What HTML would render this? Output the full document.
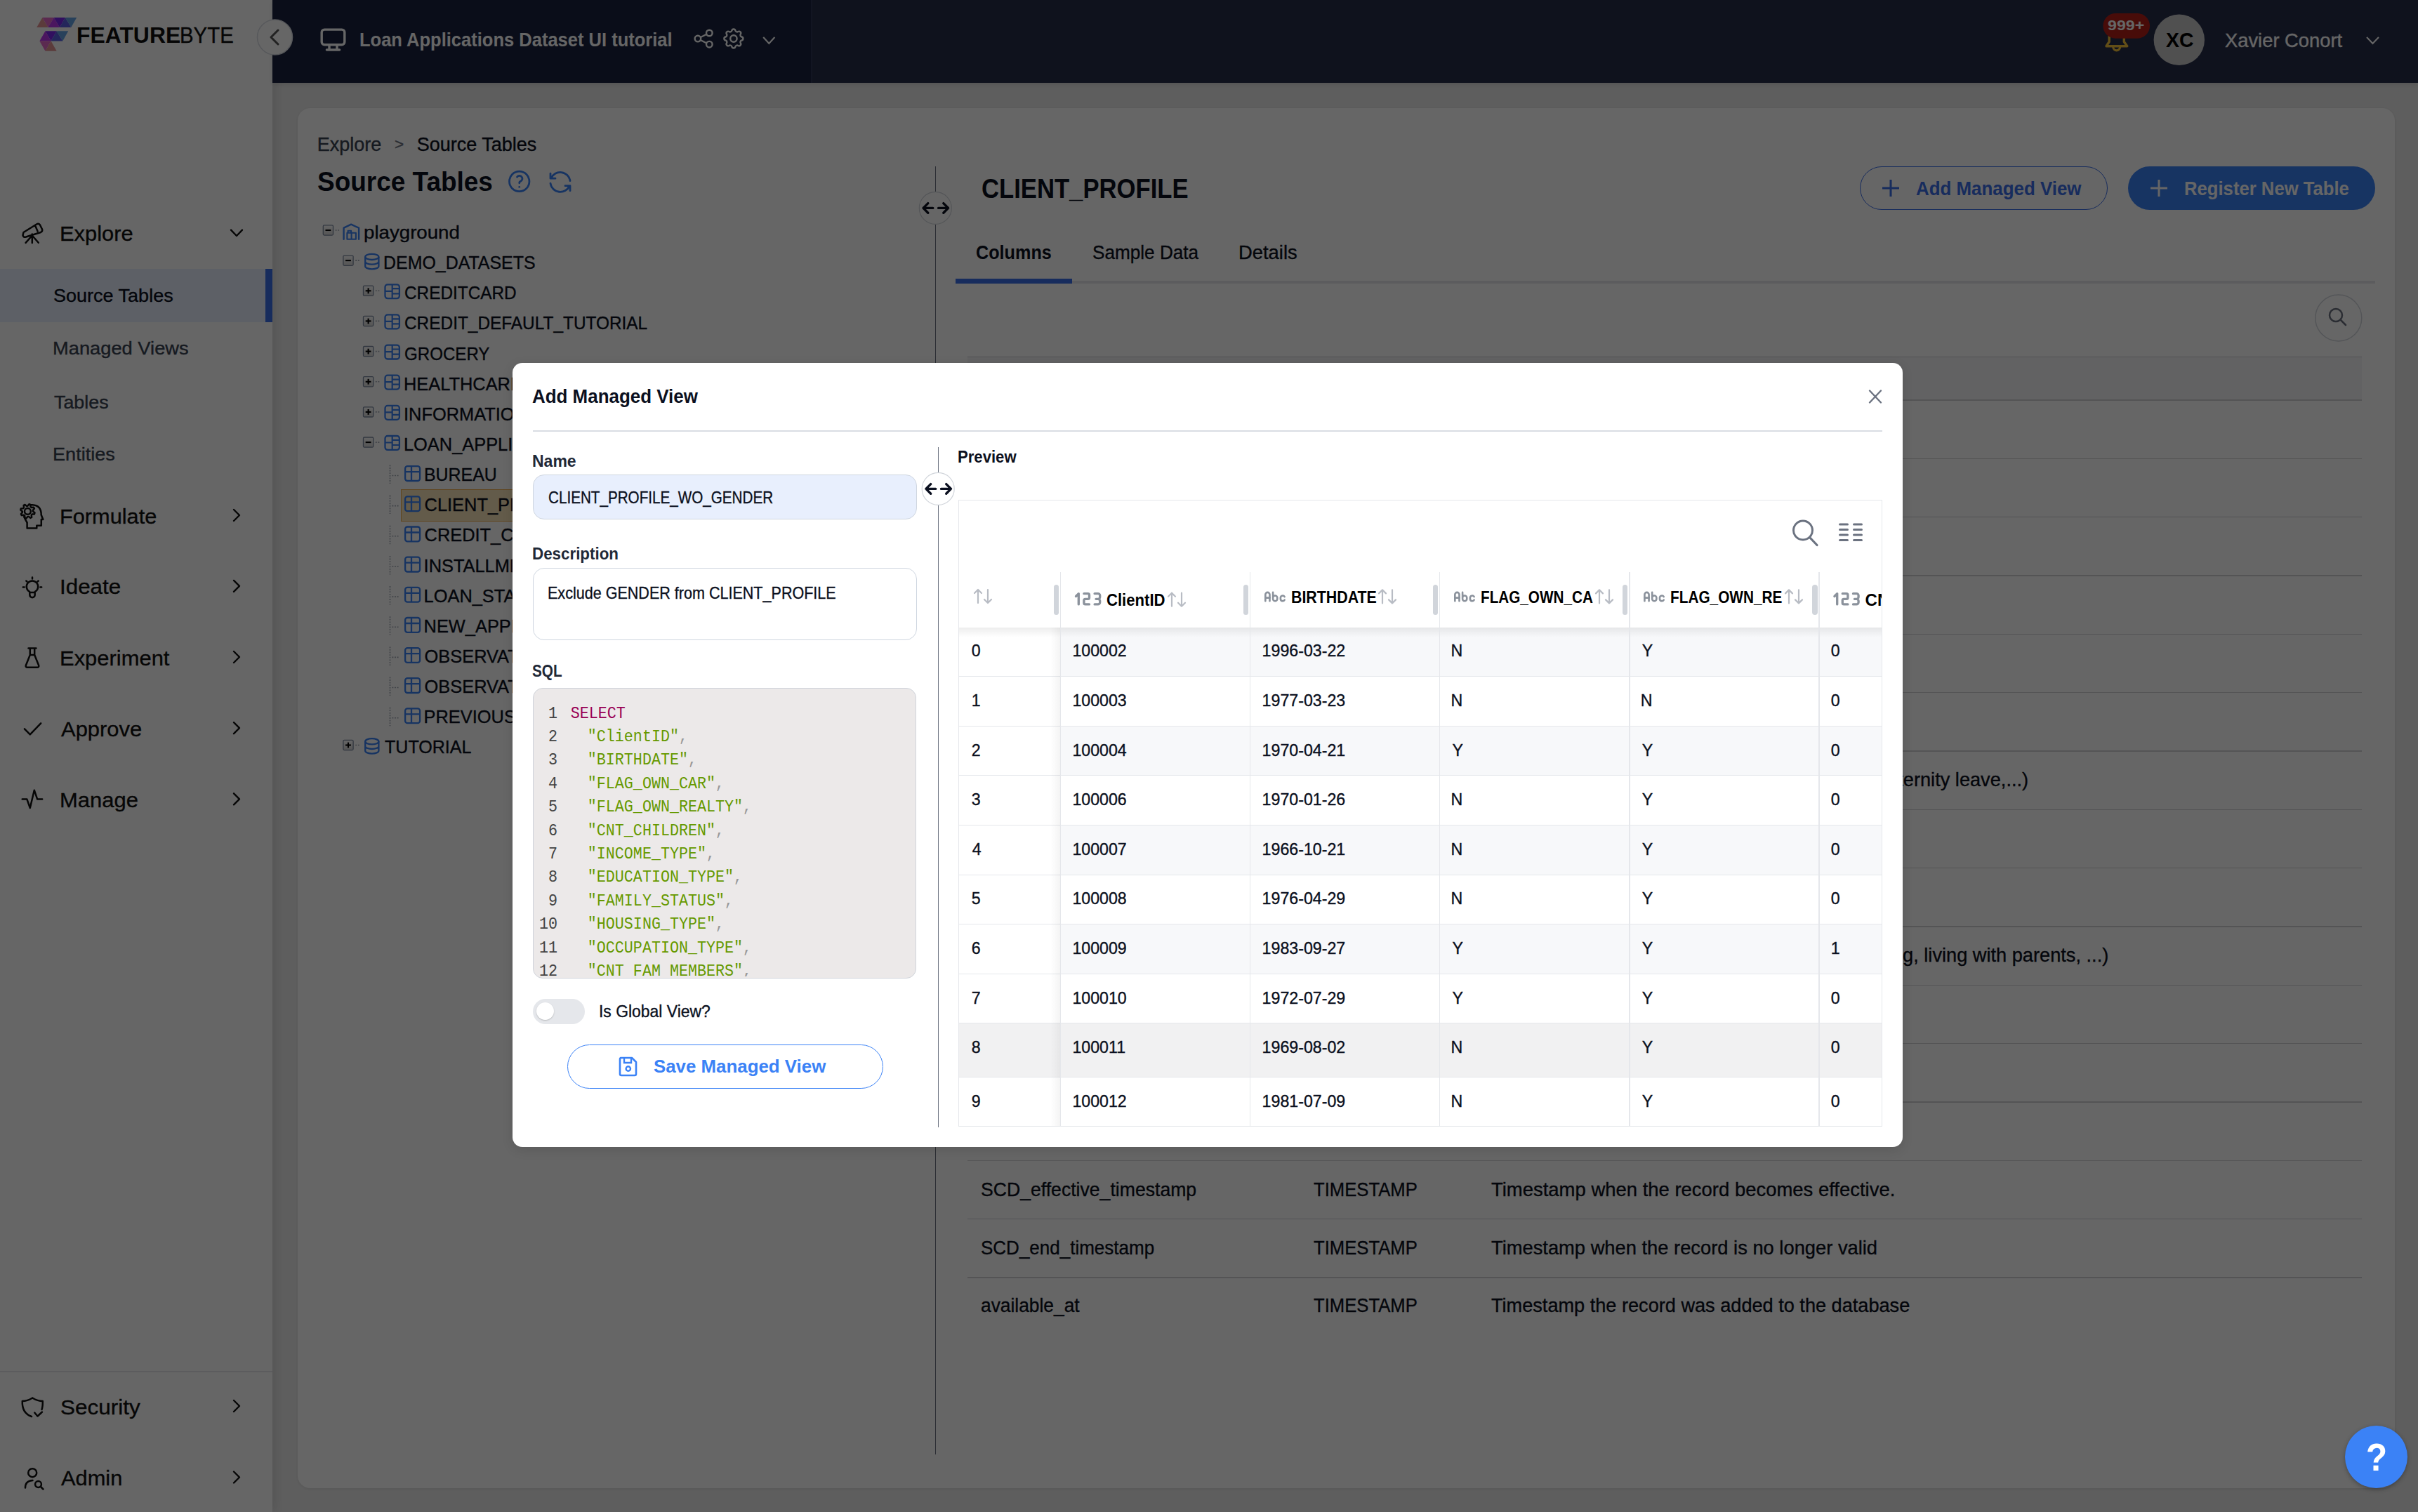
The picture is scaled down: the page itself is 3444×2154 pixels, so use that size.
<!DOCTYPE html>
<html><head><meta charset="utf-8"><title>FeatureByte - Add Managed View</title>
<style>html,body{margin:0;padding:0;width:3444px;height:2154px;overflow:hidden;font-family:'Liberation Sans', sans-serif;}</style></head>
<body><div style="position:relative;width:3444px;height:2154px;overflow:hidden;">
<div style="position:absolute;left:0;top:0;width:3444px;height:2154px;z-index:0"><div style="position:absolute;left:0px;top:0px;width:3444px;height:2154px;background:#ebebeb;"></div><div style="position:absolute;left:0px;top:0px;width:388px;height:2154px;background:#ffffff;box-shadow:4px 0 14px rgba(0,0,0,0.10);"></div><div style="position:absolute;left:388px;top:0px;width:3056px;height:118px;background:#262d4a;box-shadow:0 2px 6px rgba(0,0,0,0.12);"></div><div style="position:absolute;left:388px;top:0px;width:767px;height:118px;background:#1b2240;border-right:2px solid #2f3656;"></div><div style="position:absolute;left:424px;top:154px;width:2987px;height:1966px;background:#ffffff;border-radius:18px;box-shadow:0 1px 4px rgba(0,0,0,0.08);"></div><div style="position:absolute;left:108.9px;top:34.5px;font-family:'Liberation Sans', sans-serif;font-size:31px;line-height:31px;font-weight:700;color:#111111;white-space:pre;z-index:2;transform:scale(1.0284,1.0000);transform-origin:0 25.5px;">FEATURE</div><div style="position:absolute;left:256.1px;top:34.5px;font-family:'Liberation Sans', sans-serif;font-size:31px;line-height:31px;font-weight:400;color:#111111;white-space:pre;z-index:2;-webkit-text-stroke:0.35px #111111;transform:scale(0.9487,1.0000);transform-origin:0 25.5px;">BYTE</div><div style="position:absolute;left:512.2px;top:43.0px;font-family:'Liberation Sans', sans-serif;font-size:28px;line-height:28px;font-weight:700;color:#ffffff;white-space:pre;z-index:2;transform:scale(0.9113,1.0000);transform-origin:0 23.0px;">Loan Applications Dataset UI tutorial</div><div style="position:absolute;left:3002.0px;top:26.1px;font-family:'Liberation Sans', sans-serif;font-size:20.5px;line-height:20.5px;font-weight:700;color:#ffffff;white-space:pre;z-index:2;transform:scale(1.1304,1.0000);transform-origin:0 16.9px;">999+</div><div style="position:absolute;left:3084.8px;top:42.1px;font-family:'Liberation Sans', sans-serif;font-size:30px;line-height:30px;font-weight:700;color:#000000;white-space:pre;z-index:2;transform:scale(0.9463,1.0000);transform-origin:0 24.7px;">XC</div><div style="position:absolute;left:3169.2px;top:43.8px;font-family:'Liberation Sans', sans-serif;font-size:27.5px;line-height:27.5px;font-weight:400;color:#ffffff;white-space:pre;z-index:2;-webkit-text-stroke:0.35px #ffffff;transform:scale(0.9940,1.0000);transform-origin:0 22.6px;">Xavier Conort</div><div style="position:absolute;left:0px;top:383px;width:378px;height:76px;background:#e8efff;"></div><div style="position:absolute;left:378px;top:383px;width:10px;height:76px;background:#3b6ee8;"></div><div style="position:absolute;left:84.8px;top:317.0px;font-family:'Liberation Sans', sans-serif;font-size:30.4px;line-height:30.4px;font-weight:400;color:#111111;white-space:pre;z-index:2;-webkit-text-stroke:0.35px #111111;transform:scale(1.0160,1.0000);transform-origin:0 25.0px;">Explore</div><div style="position:absolute;left:75.7px;top:408.3px;font-family:'Liberation Sans', sans-serif;font-size:26px;line-height:26px;font-weight:400;color:#0b1020;white-space:pre;z-index:2;-webkit-text-stroke:0.35px #0b1020;transform:scale(1.0387,1.0000);transform-origin:0 21.4px;">Source Tables</div><div style="position:absolute;left:74.6px;top:483.4px;font-family:'Liberation Sans', sans-serif;font-size:26px;line-height:26px;font-weight:400;color:#374151;white-space:pre;z-index:2;-webkit-text-stroke:0.35px #374151;transform:scale(1.0495,1.0000);transform-origin:0 21.4px;">Managed Views</div><div style="position:absolute;left:76.7px;top:559.6px;font-family:'Liberation Sans', sans-serif;font-size:26px;line-height:26px;font-weight:400;color:#374151;white-space:pre;z-index:2;-webkit-text-stroke:0.35px #374151;transform:scale(1.0333,1.0000);transform-origin:0 21.4px;">Tables</div><div style="position:absolute;left:74.6px;top:634.2px;font-family:'Liberation Sans', sans-serif;font-size:26px;line-height:26px;font-weight:400;color:#374151;white-space:pre;z-index:2;-webkit-text-stroke:0.35px #374151;transform:scale(1.0422,1.0000);transform-origin:0 21.4px;">Entities</div><div style="position:absolute;left:84.6px;top:719.5px;font-family:'Liberation Sans', sans-serif;font-size:30.4px;line-height:30.4px;font-weight:400;color:#111111;white-space:pre;z-index:2;-webkit-text-stroke:0.35px #111111;transform:scale(1.0112,1.0000);transform-origin:0 25.0px;">Formulate</div><div style="position:absolute;left:84.5px;top:820.4px;font-family:'Liberation Sans', sans-serif;font-size:30.4px;line-height:30.4px;font-weight:400;color:#111111;white-space:pre;z-index:2;-webkit-text-stroke:0.35px #111111;transform:scale(1.0321,1.0000);transform-origin:0 25.0px;">Ideate</div><div style="position:absolute;left:84.6px;top:921.5px;font-family:'Liberation Sans', sans-serif;font-size:30.4px;line-height:30.4px;font-weight:400;color:#111111;white-space:pre;z-index:2;-webkit-text-stroke:0.35px #111111;transform:scale(1.0178,1.0000);transform-origin:0 25.0px;">Experiment</div><div style="position:absolute;left:86.6px;top:1022.7px;font-family:'Liberation Sans', sans-serif;font-size:30.4px;line-height:30.4px;font-weight:400;color:#111111;white-space:pre;z-index:2;-webkit-text-stroke:0.35px #111111;transform:scale(1.0179,1.0000);transform-origin:0 25.0px;">Approve</div><div style="position:absolute;left:84.6px;top:1123.8px;font-family:'Liberation Sans', sans-serif;font-size:30.4px;line-height:30.4px;font-weight:400;color:#111111;white-space:pre;z-index:2;-webkit-text-stroke:0.35px #111111;transform:scale(1.0187,1.0000);transform-origin:0 25.0px;">Manage</div><div style="position:absolute;left:0px;top:1953px;width:388px;height:2px;background:#e5e7eb;"></div><div style="position:absolute;left:85.5px;top:1988.5px;font-family:'Liberation Sans', sans-serif;font-size:30.4px;line-height:30.4px;font-weight:400;color:#111111;white-space:pre;z-index:2;-webkit-text-stroke:0.35px #111111;transform:scale(1.0367,1.0000);transform-origin:0 25.0px;">Security</div><div style="position:absolute;left:86.5px;top:2090.0px;font-family:'Liberation Sans', sans-serif;font-size:30.4px;line-height:30.4px;font-weight:400;color:#111111;white-space:pre;z-index:2;-webkit-text-stroke:0.35px #111111;transform:scale(1.0141,1.0000);transform-origin:0 25.0px;">Admin</div><div style="position:absolute;left:451.7px;top:192.8px;font-family:'Liberation Sans', sans-serif;font-size:27px;line-height:27px;font-weight:400;color:#374151;white-space:pre;z-index:2;-webkit-text-stroke:0.35px #374151;">Explore</div><div style="position:absolute;left:561.7px;top:194.9px;font-family:'Liberation Sans', sans-serif;font-size:22px;line-height:22px;font-weight:400;color:#6b7280;white-space:pre;z-index:2;-webkit-text-stroke:0.35px #6b7280;transform:scale(1.0273,1.0000);transform-origin:0 18.1px;">&gt;</div><div style="position:absolute;left:593.7px;top:192.8px;font-family:'Liberation Sans', sans-serif;font-size:27px;line-height:27px;font-weight:400;color:#0b1020;white-space:pre;z-index:2;-webkit-text-stroke:0.35px #0b1020;">Source Tables</div><div style="position:absolute;left:452.0px;top:239.7px;font-family:'Liberation Sans', sans-serif;font-size:38px;line-height:38px;font-weight:700;color:#0b1020;white-space:pre;z-index:2;transform:scale(0.9725,1.0000);transform-origin:0 31.3px;">Source Tables</div><div style="position:absolute;left:517.9px;top:318.9px;font-family:'Liberation Sans', sans-serif;font-size:25.4px;line-height:25.4px;font-weight:400;color:#0b1020;white-space:pre;z-index:2;-webkit-text-stroke:0.35px #0b1020;transform:scale(1.0894,1.0000);transform-origin:0 20.9px;">playground</div><div style="position:absolute;left:546.4px;top:362.0px;font-family:'Liberation Sans', sans-serif;font-size:25.4px;line-height:25.4px;font-weight:400;color:#0b1020;white-space:pre;z-index:2;-webkit-text-stroke:0.35px #0b1020;transform:scale(0.9817,1.0000);transform-origin:0 20.9px;">DEMO_DATASETS</div><div style="position:absolute;left:576.0px;top:405.2px;font-family:'Liberation Sans', sans-serif;font-size:25.4px;line-height:25.4px;font-weight:400;color:#0b1020;white-space:pre;z-index:2;-webkit-text-stroke:0.35px #0b1020;transform:scale(0.9594,1.0000);transform-origin:0 20.9px;">CREDITCARD</div><div style="position:absolute;left:576.0px;top:448.3px;font-family:'Liberation Sans', sans-serif;font-size:25.4px;line-height:25.4px;font-weight:400;color:#0b1020;white-space:pre;z-index:2;-webkit-text-stroke:0.35px #0b1020;transform:scale(0.9610,1.0000);transform-origin:0 20.9px;">CREDIT_DEFAULT_TUTORIAL</div><div style="position:absolute;left:576.1px;top:491.5px;font-family:'Liberation Sans', sans-serif;font-size:25.4px;line-height:25.4px;font-weight:400;color:#0b1020;white-space:pre;z-index:2;-webkit-text-stroke:0.35px #0b1020;transform:scale(0.9492,1.0000);transform-origin:0 20.9px;">GROCERY</div><div style="position:absolute;left:575.0px;top:534.6px;font-family:'Liberation Sans', sans-serif;font-size:25.4px;line-height:25.4px;font-weight:400;color:#0b1020;white-space:pre;z-index:2;-webkit-text-stroke:0.35px #0b1020;">HEALTHCARE</div><div style="position:absolute;left:575.0px;top:577.8px;font-family:'Liberation Sans', sans-serif;font-size:25.4px;line-height:25.4px;font-weight:400;color:#0b1020;white-space:pre;z-index:2;-webkit-text-stroke:0.35px #0b1020;">INFORMATION_SCHEMA</div><div style="position:absolute;left:575.0px;top:620.9px;font-family:'Liberation Sans', sans-serif;font-size:25.4px;line-height:25.4px;font-weight:400;color:#0b1020;white-space:pre;z-index:2;-webkit-text-stroke:0.35px #0b1020;">LOAN_APPLICATIONS</div><div style="position:absolute;left:603.6px;top:664.1px;font-family:'Liberation Sans', sans-serif;font-size:25.4px;line-height:25.4px;font-weight:400;color:#0b1020;white-space:pre;z-index:2;-webkit-text-stroke:0.35px #0b1020;transform:scale(0.9804,1.0000);transform-origin:0 20.9px;">BUREAU</div><div style="position:absolute;left:571.3px;top:697.3px;width:168.70000000000005px;height:46.200000000000045px;background:#f7e4b8;border:1.6px solid #f0ae52;box-sizing:border-box;"></div><div style="position:absolute;left:604.6px;top:707.2px;font-family:'Liberation Sans', sans-serif;font-size:25.4px;line-height:25.4px;font-weight:400;color:#0b1020;white-space:pre;z-index:2;-webkit-text-stroke:0.35px #0b1020;">CLIENT_PROFILE</div><div style="position:absolute;left:604.6px;top:750.4px;font-family:'Liberation Sans', sans-serif;font-size:25.4px;line-height:25.4px;font-weight:400;color:#0b1020;white-space:pre;z-index:2;-webkit-text-stroke:0.35px #0b1020;">CREDIT_CARD_MONTHLY_BALANCE</div><div style="position:absolute;left:603.6px;top:793.5px;font-family:'Liberation Sans', sans-serif;font-size:25.4px;line-height:25.4px;font-weight:400;color:#0b1020;white-space:pre;z-index:2;-webkit-text-stroke:0.35px #0b1020;">INSTALLMENTS_PAYMENTS</div><div style="position:absolute;left:603.6px;top:836.7px;font-family:'Liberation Sans', sans-serif;font-size:25.4px;line-height:25.4px;font-weight:400;color:#0b1020;white-space:pre;z-index:2;-webkit-text-stroke:0.35px #0b1020;">LOAN_STATUS</div><div style="position:absolute;left:603.6px;top:879.8px;font-family:'Liberation Sans', sans-serif;font-size:25.4px;line-height:25.4px;font-weight:400;color:#0b1020;white-space:pre;z-index:2;-webkit-text-stroke:0.35px #0b1020;">NEW_APPLICATION</div><div style="position:absolute;left:604.6px;top:923.0px;font-family:'Liberation Sans', sans-serif;font-size:25.4px;line-height:25.4px;font-weight:400;color:#0b1020;white-space:pre;z-index:2;-webkit-text-stroke:0.35px #0b1020;">OBSERVATION_TABLE</div><div style="position:absolute;left:604.6px;top:966.1px;font-family:'Liberation Sans', sans-serif;font-size:25.4px;line-height:25.4px;font-weight:400;color:#0b1020;white-space:pre;z-index:2;-webkit-text-stroke:0.35px #0b1020;">OBSERVATION_TABLE_2</div><div style="position:absolute;left:603.6px;top:1009.3px;font-family:'Liberation Sans', sans-serif;font-size:25.4px;line-height:25.4px;font-weight:400;color:#0b1020;white-space:pre;z-index:2;-webkit-text-stroke:0.35px #0b1020;">PREVIOUS_APPLICATION</div><div style="position:absolute;left:548.4px;top:1052.4px;font-family:'Liberation Sans', sans-serif;font-size:25.4px;line-height:25.4px;font-weight:400;color:#0b1020;white-space:pre;z-index:2;-webkit-text-stroke:0.35px #0b1020;transform:scale(0.9872,1.0000);transform-origin:0 20.9px;">TUTORIAL</div><div style="position:absolute;left:1331.7px;top:237px;width:1.2999999999999545px;height:1835px;background:#6b7280;"></div><div style="position:absolute;left:1397.9px;top:249.6px;font-family:'Liberation Sans', sans-serif;font-size:38.5px;line-height:38.5px;font-weight:700;color:#0b1020;white-space:pre;z-index:2;transform:scale(0.9000,1.0000);transform-origin:0 31.7px;">CLIENT_PROFILE</div><div style="position:absolute;left:1390.1px;top:345.8px;font-family:'Liberation Sans', sans-serif;font-size:27.5px;line-height:27.5px;font-weight:700;color:#0b1020;white-space:pre;z-index:2;transform:scale(0.9164,1.0000);transform-origin:0 22.6px;">Columns</div><div style="position:absolute;left:1555.8px;top:345.8px;font-family:'Liberation Sans', sans-serif;font-size:27.5px;line-height:27.5px;font-weight:400;color:#0b1020;white-space:pre;z-index:2;-webkit-text-stroke:0.35px #0b1020;transform:scale(0.9506,1.0000);transform-origin:0 22.6px;">Sample Data</div><div style="position:absolute;left:1764.0px;top:345.8px;font-family:'Liberation Sans', sans-serif;font-size:27.5px;line-height:27.5px;font-weight:400;color:#0b1020;white-space:pre;z-index:2;-webkit-text-stroke:0.35px #0b1020;transform:scale(0.9951,1.0000);transform-origin:0 22.6px;">Details</div><div style="position:absolute;left:1361px;top:400px;width:2022px;height:4px;background:#e5e7eb;"></div><div style="position:absolute;left:1361px;top:397px;width:166px;height:7px;background:#3b6ee8;"></div><div style="position:absolute;left:2649px;top:237px;width:353px;height:62.39999999999998px;background:transparent;border:1.6px solid #3b6ee8;border-radius:32px;box-sizing:border-box;"></div><div style="position:absolute;left:2729.1px;top:255.0px;font-family:'Liberation Sans', sans-serif;font-size:27.8px;line-height:27.8px;font-weight:700;color:#3b6ee8;white-space:pre;z-index:2;transform:scale(0.9313,1.0000);transform-origin:0 22.9px;">Add Managed View</div><div style="position:absolute;left:3031px;top:237px;width:352px;height:62.39999999999998px;background:#3b82f6;border-radius:32px;"></div><div style="position:absolute;left:3110.5px;top:255.0px;font-family:'Liberation Sans', sans-serif;font-size:27.8px;line-height:27.8px;font-weight:700;color:#ffffff;white-space:pre;z-index:2;transform:scale(0.9234,1.0000);transform-origin:0 22.9px;">Register New Table</div><div style="position:absolute;left:1378px;top:508px;width:1986px;height:62px;background:#f6f6f7;"></div><div style="position:absolute;left:1378px;top:569.4px;width:1986px;height:1.3999999999999773px;background:#d2d2d4;"></div><div style="position:absolute;left:1378px;top:652.73px;width:1986px;height:1.3999999999999773px;background:#d2d2d4;"></div><div style="position:absolute;left:1378px;top:736.06px;width:1986px;height:1.3999999999999773px;background:#d2d2d4;"></div><div style="position:absolute;left:1378px;top:819.39px;width:1986px;height:1.3999999999999773px;background:#d2d2d4;"></div><div style="position:absolute;left:1378px;top:902.7199999999999px;width:1986px;height:1.3999999999999773px;background:#d2d2d4;"></div><div style="position:absolute;left:1378px;top:986.05px;width:1986px;height:1.3999999999999773px;background:#d2d2d4;"></div><div style="position:absolute;left:1378px;top:1069.38px;width:1986px;height:1.3999999999998636px;background:#d2d2d4;"></div><div style="position:absolute;left:1378px;top:1152.71px;width:1986px;height:1.3999999999998636px;background:#d2d2d4;"></div><div style="position:absolute;left:1378px;top:1236.04px;width:1986px;height:1.3999999999998636px;background:#d2d2d4;"></div><div style="position:absolute;left:1378px;top:1319.3700000000001px;width:1986px;height:1.3999999999998636px;background:#d2d2d4;"></div><div style="position:absolute;left:1378px;top:1402.7px;width:1986px;height:1.3999999999998636px;background:#d2d2d4;"></div><div style="position:absolute;left:1378px;top:1486.0300000000002px;width:1986px;height:1.3999999999998636px;background:#d2d2d4;"></div><div style="position:absolute;left:1378px;top:1569.3600000000001px;width:1986px;height:1.3999999999998636px;background:#d2d2d4;"></div><div style="position:absolute;left:1378px;top:1652.69px;width:1986px;height:1.3999999999998636px;background:#d2d2d4;"></div><div style="position:absolute;left:1378px;top:1736.02px;width:1986px;height:1.3999999999998636px;background:#d2d2d4;"></div><div style="position:absolute;left:1378px;top:1819.3500000000001px;width:1986px;height:1.3999999999998636px;background:#d2d2d4;"></div><div style="position:absolute;left:1378px;top:507.6px;width:1986px;height:1.3999999999999773px;background:#d2d2d4;"></div><div style="position:absolute;left:1513.0px;top:1096.6px;font-family:'Liberation Sans', sans-serif;font-size:27.2px;line-height:27.2px;font-weight:400;color:#0b1020;white-space:pre;z-index:2;-webkit-text-stroke:0.35px #0b1020;">Income type (Working, Commercial associate, Pensioner, Unemployed, Student, Businessman, Maternity leave,...)</div><div style="position:absolute;left:2466.8px;top:1347.3px;font-family:'Liberation Sans', sans-serif;font-size:27.2px;line-height:27.2px;font-weight:400;color:#0b1020;white-space:pre;z-index:2;-webkit-text-stroke:0.35px #0b1020;">Housing type (renting, living with parents, ...)</div><div style="position:absolute;left:1397.2px;top:1681.1px;font-family:'Liberation Sans', sans-serif;font-size:27.2px;line-height:27.2px;font-weight:400;color:#0b1020;white-space:pre;z-index:2;-webkit-text-stroke:0.35px #0b1020;transform:scale(0.9788,1.0000);transform-origin:0 22.4px;">SCD_effective_timestamp</div><div style="position:absolute;left:1870.7px;top:1681.1px;font-family:'Liberation Sans', sans-serif;font-size:27.2px;line-height:27.2px;font-weight:400;color:#0b1020;white-space:pre;z-index:2;-webkit-text-stroke:0.35px #0b1020;transform:scale(0.9436,1.0000);transform-origin:0 22.4px;">TIMESTAMP</div><div style="position:absolute;left:2124.4px;top:1681.1px;font-family:'Liberation Sans', sans-serif;font-size:27.2px;line-height:27.2px;font-weight:400;color:#0b1020;white-space:pre;z-index:2;-webkit-text-stroke:0.35px #0b1020;transform:scale(1.0099,1.0000);transform-origin:0 22.4px;">Timestamp when the record becomes effective.</div><div style="position:absolute;left:1397.2px;top:1764.3px;font-family:'Liberation Sans', sans-serif;font-size:27.2px;line-height:27.2px;font-weight:400;color:#0b1020;white-space:pre;z-index:2;-webkit-text-stroke:0.35px #0b1020;transform:scale(0.9564,1.0000);transform-origin:0 22.4px;">SCD_end_timestamp</div><div style="position:absolute;left:1870.7px;top:1764.3px;font-family:'Liberation Sans', sans-serif;font-size:27.2px;line-height:27.2px;font-weight:400;color:#0b1020;white-space:pre;z-index:2;-webkit-text-stroke:0.35px #0b1020;transform:scale(0.9436,1.0000);transform-origin:0 22.4px;">TIMESTAMP</div><div style="position:absolute;left:2124.4px;top:1764.3px;font-family:'Liberation Sans', sans-serif;font-size:27.2px;line-height:27.2px;font-weight:400;color:#0b1020;white-space:pre;z-index:2;-webkit-text-stroke:0.35px #0b1020;transform:scale(1.0046,1.0000);transform-origin:0 22.4px;">Timestamp when the record is no longer valid</div><div style="position:absolute;left:1397.2px;top:1845.6px;font-family:'Liberation Sans', sans-serif;font-size:27.2px;line-height:27.2px;font-weight:400;color:#0b1020;white-space:pre;z-index:2;-webkit-text-stroke:0.35px #0b1020;transform:scale(0.9694,1.0000);transform-origin:0 22.4px;">available_at</div><div style="position:absolute;left:1870.7px;top:1845.6px;font-family:'Liberation Sans', sans-serif;font-size:27.2px;line-height:27.2px;font-weight:400;color:#0b1020;white-space:pre;z-index:2;-webkit-text-stroke:0.35px #0b1020;transform:scale(0.9436,1.0000);transform-origin:0 22.4px;">TIMESTAMP</div><div style="position:absolute;left:2124.4px;top:1845.6px;font-family:'Liberation Sans', sans-serif;font-size:27.2px;line-height:27.2px;font-weight:400;color:#0b1020;white-space:pre;z-index:2;-webkit-text-stroke:0.35px #0b1020;transform:scale(0.9980,1.0000);transform-origin:0 22.4px;">Timestamp the record was added to the database</div><svg style="position:absolute;left:0;top:0;z-index:1" width="3444" height="2154"><polygon points="52.27,39.00 68.47,39.00 60.37,24.95" fill="#e49595"/><polygon points="60.37,24.95 76.80,24.95 68.47,39.00" fill="#e36ac8"/><polygon points="68.47,39.00 84.90,39.00 76.80,24.95" fill="#bb37ee"/><polygon points="76.80,24.95 93.00,24.95 84.90,39.00" fill="#7c27ee"/><polygon points="84.90,39.00 101.34,39.00 93.00,24.95" fill="#5a5fe4"/><polygon points="93.00,24.95 109.20,24.95 101.34,39.00" fill="#64a2e4"/><polygon points="64.50,44.17 80.70,44.17 72.60,58.52" fill="#7c27ee"/><polygon points="56.40,58.52 72.60,58.52 64.50,44.17" fill="#bb37ee"/><polygon points="72.60,58.52 89.30,58.52 80.70,44.17" fill="#5a5fe4"/><polygon points="80.70,44.17 97.20,44.17 89.30,58.52" fill="#64a2e4"/><polygon points="56.40,58.52 72.60,58.52 64.50,72.64" fill="#e36ac8"/><polygon points="64.50,72.64 80.70,72.64 72.60,58.52" fill="#e49595"/><circle cx="391.5" cy="53" r="25" fill="#ffffff" stroke="#d9dce3" stroke-width="1.5"/><path d="M396 43 L386 53 L396 63" fill="none" stroke="#555" stroke-width="3" stroke-linecap="round" stroke-linejoin="round"/><rect x="458.2" y="42.1" width="32.6" height="21.6" rx="4" fill="none" stroke="#fff" stroke-width="3.4"/><path d="M469 65 V71 M480 65 V71" stroke="#fff" stroke-width="3.4"/><path d="M465.5 71 H483.5" stroke="#fff" stroke-width="3.6" stroke-linecap="round"/><g fill="none" stroke="#fff" stroke-width="2.4"><circle cx="993.9" cy="55.1" r="4.3"/><circle cx="1010.3" cy="47" r="4.3"/><circle cx="1010.3" cy="63.2" r="4.3"/><path d="M998 53 L1006 49 M998 57.2 L1006 61.2"/></g><path transform="translate(1026.9,37) scale(1.5)" d="M10.325 4.317c.426-1.756 2.924-1.756 3.35 0a1.724 1.724 0 0 0 2.573 1.066c1.543-.94 3.31.826 2.37 2.37a1.724 1.724 0 0 0 1.065 2.572c1.756.426 1.756 2.924 0 3.35a1.724 1.724 0 0 0-1.066 2.573c.94 1.543-.826 3.31-2.370 2.37a1.724 1.724 0 0 0-2.572 1.065c-.426 1.756-2.924 1.756-3.35 0a1.724 1.724 0 0 0-2.573-1.066c-1.543.94-3.31-.826-2.37-2.37a1.724 1.724 0 0 0-1.065-2.572c-1.756-.426-1.756-2.924 0-3.35a1.724 1.724 0 0 0 1.066-2.573c-.94-1.543.826-3.31 2.37-2.37c1 .608 2.296.07 2.572-1.065z" fill="none" stroke="#fff" stroke-width="1.6"/><circle cx="1044.9" cy="55" r="4.7" fill="none" stroke="#fff" stroke-width="2.4"/><path d="M1087.2 52.9 L1095.3 61.9 L1103.4 52.9" fill="none" stroke="#fff" stroke-width="2.2"/><path d="M3004.2 44 V59.5 L3000 65.8 H3029.8 L3025.3 59.5 V44" fill="none" stroke="#f5c23a" stroke-width="3.4" stroke-linejoin="round"/><path d="M3009.8 67 A4.9 4.9 0 0 0 3019.6 67" fill="none" stroke="#f5c23a" stroke-width="3.2"/><rect x="2995.4" y="19" width="66.6" height="35.7" rx="17.8" fill="#b51f18"/><circle cx="3103.8" cy="56.8" r="36.2" fill="#c8c8c8"/><path d="M3371 53 L3379.5 62 L3388 53" fill="none" stroke="#fff" stroke-width="2.2"/><path d="M33.5 331 L52 319.5 Q55 317.5 57 320.5 L60 326.5 Q61 329.5 58 331 L37 337.5 Q33 338.5 32.5 335 Z M50.6 322.6 L53.6 329.6" fill="none" stroke="#111111" stroke-width="2.5" stroke-linecap="round" stroke-linejoin="round"/><path d="M45.8 333.6 V346 M45.8 335.5 L36.6 345.8 M45.8 335.5 L54.8 345.8" fill="none" stroke="#111111" stroke-width="2.5" stroke-linecap="round" stroke-linejoin="round"/><path d="M34.2 736.2 Q36.5 741 38.6 744.5 V752.4 H52.3 V748.8 H58.8 V740 H61.3 L58.7 733.5 Q59 720 46 719.2 H43" fill="none" stroke="#111111" stroke-width="2.5" stroke-linecap="round" stroke-linejoin="round" stroke-width="2.1"/><polygon points="49.5,730.4 48.9,732.4 45.7,732.6 44.8,733.8 45.1,737.0 43.3,737.9 40.9,735.9 39.4,736.0 37.4,738.5 35.4,737.9 35.2,734.7 34.0,733.8 30.8,734.1 29.9,732.3 31.9,729.9 31.8,728.4 29.3,726.4 29.9,724.4 33.1,724.2 34.0,723.0 33.7,719.8 35.5,718.9 37.9,720.9 39.4,720.8 41.4,718.3 43.4,718.9 43.6,722.1 44.8,723.0 48.0,722.7 48.9,724.5 46.9,726.9 47.0,728.4" fill="none" stroke="#111111" stroke-width="2.5" stroke-linecap="round" stroke-linejoin="round" stroke-width="1.9"/><circle cx="39.4" cy="728.4" r="4.4" fill="none" stroke="#111111" stroke-width="2.5" stroke-linecap="round" stroke-linejoin="round" stroke-width="1.9"/><path d="M42.3 843 A8.2 8.2 0 1 1 49.7 843 V847.5 A3.7 3.7 0 0 1 42.3 847.5 Z M42.5 844 H49.5" fill="none" stroke="#111111" stroke-width="2.5" stroke-linecap="round" stroke-linejoin="round"/><path d="M46 822.5 V824.5 M37.3 827.5 L38.5 828.5 M54.7 827.5 L53.5 828.5 M32.8 836.5 H34.6 M57.4 836.5 H59.2" fill="none" stroke="#111111" stroke-width="2.5" stroke-linecap="round" stroke-linejoin="round"/><path d="M40.5 923.6 H51.5 M42.8 923.6 V933 L36.8 948 Q36.2 950.8 39 950.8 H53 Q55.8 950.8 55.2 948 L49.2 933 V923.6 M42.8 933 H49.2" fill="none" stroke="#111111" stroke-width="2.5" stroke-linecap="round" stroke-linejoin="round"/><path d="M34.9 1038.4 L42.8 1046.3 L58.2 1030.4" fill="none" stroke="#111111" stroke-width="2.5" stroke-linecap="round" stroke-linejoin="round" stroke-width="2.7"/><path d="M31.7 1138.6 H38.4 L42.8 1151 L48.8 1125.7 L53.2 1138.6 H60.2" fill="none" stroke="#111111" stroke-width="2.5" stroke-linecap="round" stroke-linejoin="round" stroke-width="2.7"/><path d="M46.2 1991.5 Q39 1996 31.8 1996 Q31 2013 45 2018 M46.2 1991.5 Q53.5 1996 60.8 1996 Q61 2004 59.5 2008 M49.3 2012.5 L53.5 2017.5 L60 2011.5" fill="none" stroke="#111111" stroke-width="2.5" stroke-linecap="round" stroke-linejoin="round" stroke-width="2.8"/><circle cx="46.2" cy="2098.2" r="6" fill="none" stroke="#111111" stroke-width="2.5" stroke-linecap="round" stroke-linejoin="round" stroke-width="2.8"/><path d="M36 2119.5 Q36 2109.5 46.5 2109" fill="none" stroke="#111111" stroke-width="2.5" stroke-linecap="round" stroke-linejoin="round" stroke-width="2.8"/><circle cx="54.5" cy="2114.5" r="4.4" fill="none" stroke="#111111" stroke-width="2.5" stroke-linecap="round" stroke-linejoin="round" stroke-width="2.6"/><path d="M58 2118 L61.5 2121.5" fill="none" stroke="#111111" stroke-width="2.5" stroke-linecap="round" stroke-linejoin="round" stroke-width="2.8"/><path d="M333 726.0 L341 734.0 L333 742.0" fill="none" stroke="#111" stroke-width="2.4" stroke-linecap="round" stroke-linejoin="round"/><path d="M333 826.9 L341 834.9 L333 842.9" fill="none" stroke="#111" stroke-width="2.4" stroke-linecap="round" stroke-linejoin="round"/><path d="M333 928.0 L341 936.0 L333 944.0" fill="none" stroke="#111" stroke-width="2.4" stroke-linecap="round" stroke-linejoin="round"/><path d="M333 1029.2 L341 1037.2 L333 1045.2" fill="none" stroke="#111" stroke-width="2.4" stroke-linecap="round" stroke-linejoin="round"/><path d="M333 1130.3 L341 1138.3 L333 1146.3" fill="none" stroke="#111" stroke-width="2.4" stroke-linecap="round" stroke-linejoin="round"/><path d="M329 327.6 L337 336 L345 327.6" fill="none" stroke="#111" stroke-width="2.4" stroke-linecap="round" stroke-linejoin="round"/><path d="M333 1995.0 L341 2003.0 L333 2011.0" fill="none" stroke="#111" stroke-width="2.4" stroke-linecap="round" stroke-linejoin="round"/><path d="M333 2096.5 L341 2104.5 L333 2112.5" fill="none" stroke="#111" stroke-width="2.4" stroke-linecap="round" stroke-linejoin="round"/><g transform="translate(720.74,239.44) scale(1.58)" fill="none" stroke="#3b82f6" stroke-width="1.75" stroke-linecap="round" stroke-linejoin="round"><circle cx="12" cy="12" r="9"/><path d="M12 17v.01"/><path d="M12 13.5a1.5 1.5 0 0 1 1 -1.5a2.6 2.6 0 1 0 -3 -4"/></g><g transform="translate(777,238.4) scale(1.75)" fill="none" stroke="#3b82f6" stroke-width="1.6" stroke-linecap="round" stroke-linejoin="round"><path d="M20 11a8.1 8.1 0 0 0 -15.5 -2m-.5 -4v4h4"/><path d="M4 13a8.1 8.1 0 0 0 15.5 2m.5 4v-4h-4"/></g><defs><linearGradient id="boxg" x1="0" y1="0" x2="0" y2="1"><stop offset="0" stop-color="#ffffff"/><stop offset="1" stop-color="#d4d4d4"/></linearGradient></defs><rect x="460.3" y="320.9" width="14.2" height="14.2" rx="1.5" fill="url(#boxg)" stroke="#7d8aa0" stroke-width="1.3"/><path d="M463.5 328.0 H471.3" stroke="#000" stroke-width="2.1"/><path d="M477.7 328.0 H483.7" stroke="#9ca3af" stroke-width="1.6" stroke-dasharray="1.8 1.8"/><path d="M489.6 340.7 V324.7 L500.1 319.7 L511.1 324.7 V340.7" fill="none" stroke="#3b82f6" stroke-width="2.4" stroke-linecap="round" stroke-linejoin="round"/><path d="M494.4 340.7 V331.7 H506.9 V340.7 Z M500.6 340.7 V331.7 M495.6 331.7 V328.7 H500.1 V331.7" fill="none" stroke="#3b82f6" stroke-width="2.1" stroke-linejoin="round"/><rect x="488.9" y="364.1" width="14.2" height="14.2" rx="1.5" fill="url(#boxg)" stroke="#7d8aa0" stroke-width="1.3"/><path d="M492.1 371.1 H499.9" stroke="#000" stroke-width="2.1"/><path d="M506.3 371.1 H512.3" stroke="#9ca3af" stroke-width="1.6" stroke-dasharray="1.8 1.8"/><ellipse cx="529.8" cy="365.9" rx="9.6" ry="4.1" fill="none" stroke="#3b82f6" stroke-width="2.3"/><path d="M520.2 365.9 V379.2 A9.6 4.1 0 0 0 539.4 379.2 V365.9 M520.2 372.6 A9.6 4.1 0 0 0 539.4 372.6" fill="none" stroke="#3b82f6" stroke-width="2.3"/><rect x="517.5" y="407.2" width="14.2" height="14.2" rx="1.5" fill="url(#boxg)" stroke="#7d8aa0" stroke-width="1.3"/><path d="M520.7 414.3 H528.5" stroke="#000" stroke-width="2.1"/><path d="M524.6 410.4 V418.2" stroke="#000" stroke-width="2.1"/><path d="M534.9 414.3 H540.9" stroke="#9ca3af" stroke-width="1.6" stroke-dasharray="1.8 1.8"/><rect x="548.5" y="405.3" width="20.4" height="19.9" rx="3.6" fill="none" stroke="#3b82f6" stroke-width="2.3"/><path d="M558.7 405.3 V425.2 M548.5 414.8 H558.7 M558.7 411.2 H568.9 M558.7 418.3 H568.9" stroke="#3b82f6" stroke-width="2.2"/><rect x="517.5" y="450.4" width="14.2" height="14.2" rx="1.5" fill="url(#boxg)" stroke="#7d8aa0" stroke-width="1.3"/><path d="M520.7 457.4 H528.5" stroke="#000" stroke-width="2.1"/><path d="M524.6 453.6 V461.4" stroke="#000" stroke-width="2.1"/><path d="M534.9 457.4 H540.9" stroke="#9ca3af" stroke-width="1.6" stroke-dasharray="1.8 1.8"/><rect x="548.5" y="448.4" width="20.4" height="19.9" rx="3.6" fill="none" stroke="#3b82f6" stroke-width="2.3"/><path d="M558.7 448.4 V468.3 M548.5 457.9 H558.7 M558.7 454.4 H568.9 M558.7 461.4 H568.9" stroke="#3b82f6" stroke-width="2.2"/><rect x="517.5" y="493.5" width="14.2" height="14.2" rx="1.5" fill="url(#boxg)" stroke="#7d8aa0" stroke-width="1.3"/><path d="M520.7 500.6 H528.5" stroke="#000" stroke-width="2.1"/><path d="M524.6 496.7 V504.5" stroke="#000" stroke-width="2.1"/><path d="M534.9 500.6 H540.9" stroke="#9ca3af" stroke-width="1.6" stroke-dasharray="1.8 1.8"/><rect x="548.5" y="491.6" width="20.4" height="19.9" rx="3.6" fill="none" stroke="#3b82f6" stroke-width="2.3"/><path d="M558.7 491.6 V511.4 M548.5 501.1 H558.7 M558.7 497.5 H568.9 M558.7 504.6 H568.9" stroke="#3b82f6" stroke-width="2.2"/><rect x="517.5" y="536.6" width="14.2" height="14.2" rx="1.5" fill="url(#boxg)" stroke="#7d8aa0" stroke-width="1.3"/><path d="M520.7 543.8 H528.5" stroke="#000" stroke-width="2.1"/><path d="M524.6 539.8 V547.6" stroke="#000" stroke-width="2.1"/><path d="M534.9 543.8 H540.9" stroke="#9ca3af" stroke-width="1.6" stroke-dasharray="1.8 1.8"/><rect x="548.5" y="534.7" width="20.4" height="19.9" rx="3.6" fill="none" stroke="#3b82f6" stroke-width="2.3"/><path d="M558.7 534.7 V554.6 M548.5 544.2 H558.7 M558.7 540.6 H568.9 M558.7 547.7 H568.9" stroke="#3b82f6" stroke-width="2.2"/><rect x="517.5" y="579.8" width="14.2" height="14.2" rx="1.5" fill="url(#boxg)" stroke="#7d8aa0" stroke-width="1.3"/><path d="M520.7 586.9 H528.5" stroke="#000" stroke-width="2.1"/><path d="M524.6 583.0 V590.8" stroke="#000" stroke-width="2.1"/><path d="M534.9 586.9 H540.9" stroke="#9ca3af" stroke-width="1.6" stroke-dasharray="1.8 1.8"/><rect x="548.5" y="577.9" width="20.4" height="19.9" rx="3.6" fill="none" stroke="#3b82f6" stroke-width="2.3"/><path d="M558.7 577.9 V597.8 M548.5 587.4 H558.7 M558.7 583.8 H568.9 M558.7 590.9 H568.9" stroke="#3b82f6" stroke-width="2.2"/><rect x="517.5" y="623.0" width="14.2" height="14.2" rx="1.5" fill="url(#boxg)" stroke="#7d8aa0" stroke-width="1.3"/><path d="M520.7 630.1 H528.5" stroke="#000" stroke-width="2.1"/><path d="M534.9 630.1 H540.9" stroke="#9ca3af" stroke-width="1.6" stroke-dasharray="1.8 1.8"/><rect x="548.5" y="621.0" width="20.4" height="19.9" rx="3.6" fill="none" stroke="#3b82f6" stroke-width="2.3"/><path d="M558.7 621.0 V640.9 M548.5 630.5 H558.7 M558.7 626.9 H568.9 M558.7 634.0 H568.9" stroke="#3b82f6" stroke-width="2.2"/><path d="M555.5 662.5 V689.0" stroke="#9ca3af" stroke-width="1.6" stroke-dasharray="1.8 1.8"/><path d="M558.5 677.5 H567.5" stroke="#9ca3af" stroke-width="1.6" stroke-dasharray="1.8 1.8"/><rect x="577.1" y="664.2" width="21" height="20.8" rx="3.2" fill="none" stroke="#3b82f6" stroke-width="2.3"/><path d="M577.1 672.2 H598.1 M586.0 664.2 V685.0" stroke="#3b82f6" stroke-width="2.3"/><path d="M555.5 705.6 V732.1" stroke="#9ca3af" stroke-width="1.6" stroke-dasharray="1.8 1.8"/><path d="M558.5 720.6 H567.5" stroke="#9ca3af" stroke-width="1.6" stroke-dasharray="1.8 1.8"/><rect x="577.1" y="707.4" width="21" height="20.8" rx="3.2" fill="none" stroke="#3b82f6" stroke-width="2.3"/><path d="M577.1 715.4 H598.1 M586.0 707.4 V728.1" stroke="#3b82f6" stroke-width="2.3"/><path d="M555.5 748.8 V775.3" stroke="#9ca3af" stroke-width="1.6" stroke-dasharray="1.8 1.8"/><path d="M558.5 763.8 H567.5" stroke="#9ca3af" stroke-width="1.6" stroke-dasharray="1.8 1.8"/><rect x="577.1" y="750.5" width="21" height="20.8" rx="3.2" fill="none" stroke="#3b82f6" stroke-width="2.3"/><path d="M577.1 758.5 H598.1 M586.0 750.5 V771.3" stroke="#3b82f6" stroke-width="2.3"/><path d="M555.5 792.0 V818.5" stroke="#9ca3af" stroke-width="1.6" stroke-dasharray="1.8 1.8"/><path d="M558.5 807.0 H567.5" stroke="#9ca3af" stroke-width="1.6" stroke-dasharray="1.8 1.8"/><rect x="577.1" y="793.7" width="21" height="20.8" rx="3.2" fill="none" stroke="#3b82f6" stroke-width="2.3"/><path d="M577.1 801.7 H598.1 M586.0 793.7 V814.5" stroke="#3b82f6" stroke-width="2.3"/><path d="M555.5 835.1 V861.6" stroke="#9ca3af" stroke-width="1.6" stroke-dasharray="1.8 1.8"/><path d="M558.5 850.1 H567.5" stroke="#9ca3af" stroke-width="1.6" stroke-dasharray="1.8 1.8"/><rect x="577.1" y="836.8" width="21" height="20.8" rx="3.2" fill="none" stroke="#3b82f6" stroke-width="2.3"/><path d="M577.1 844.8 H598.1 M586.0 836.8 V857.6" stroke="#3b82f6" stroke-width="2.3"/><path d="M555.5 878.2 V904.8" stroke="#9ca3af" stroke-width="1.6" stroke-dasharray="1.8 1.8"/><path d="M558.5 893.2 H567.5" stroke="#9ca3af" stroke-width="1.6" stroke-dasharray="1.8 1.8"/><rect x="577.1" y="880.0" width="21" height="20.8" rx="3.2" fill="none" stroke="#3b82f6" stroke-width="2.3"/><path d="M577.1 888.0 H598.1 M586.0 880.0 V900.8" stroke="#3b82f6" stroke-width="2.3"/><path d="M555.5 921.4 V947.9" stroke="#9ca3af" stroke-width="1.6" stroke-dasharray="1.8 1.8"/><path d="M558.5 936.4 H567.5" stroke="#9ca3af" stroke-width="1.6" stroke-dasharray="1.8 1.8"/><rect x="577.1" y="923.1" width="21" height="20.8" rx="3.2" fill="none" stroke="#3b82f6" stroke-width="2.3"/><path d="M577.1 931.1 H598.1 M586.0 923.1 V943.9" stroke="#3b82f6" stroke-width="2.3"/><path d="M555.5 964.5 V991.0" stroke="#9ca3af" stroke-width="1.6" stroke-dasharray="1.8 1.8"/><path d="M558.5 979.5 H567.5" stroke="#9ca3af" stroke-width="1.6" stroke-dasharray="1.8 1.8"/><rect x="577.1" y="966.2" width="21" height="20.8" rx="3.2" fill="none" stroke="#3b82f6" stroke-width="2.3"/><path d="M577.1 974.2 H598.1 M586.0 966.2 V987.0" stroke="#3b82f6" stroke-width="2.3"/><path d="M555.5 1007.7 V1034.2" stroke="#9ca3af" stroke-width="1.6" stroke-dasharray="1.8 1.8"/><path d="M558.5 1022.7 H567.5" stroke="#9ca3af" stroke-width="1.6" stroke-dasharray="1.8 1.8"/><rect x="577.1" y="1009.4" width="21" height="20.8" rx="3.2" fill="none" stroke="#3b82f6" stroke-width="2.3"/><path d="M577.1 1017.4 H598.1 M586.0 1009.4 V1030.2" stroke="#3b82f6" stroke-width="2.3"/><rect x="488.9" y="1054.4" width="14.2" height="14.2" rx="1.5" fill="url(#boxg)" stroke="#7d8aa0" stroke-width="1.3"/><path d="M492.1 1061.5 H499.9" stroke="#000" stroke-width="2.1"/><path d="M496.0 1057.6 V1065.4" stroke="#000" stroke-width="2.1"/><path d="M506.3 1061.5 H512.3" stroke="#9ca3af" stroke-width="1.6" stroke-dasharray="1.8 1.8"/><ellipse cx="529.8" cy="1056.3" rx="9.6" ry="4.1" fill="none" stroke="#3b82f6" stroke-width="2.3"/><path d="M520.2 1056.3 V1069.5 A9.6 4.1 0 0 0 539.4 1069.5 V1056.3 M520.2 1062.9 A9.6 4.1 0 0 0 539.4 1062.9" fill="none" stroke="#3b82f6" stroke-width="2.3"/><circle cx="1332.3" cy="296.4" r="23" fill="#ffffff" stroke="#d1d5db" stroke-width="1.2"/><path d="M1328.8 296.4 H1315.3 M1321.8 289.6 L1315.0 296.4 L1321.8 303.2 M1336.6 296.4 H1350.3 M1343.8 289.6 L1350.6 296.4 L1343.8 303.2" fill="none" stroke="#0b1020" stroke-width="3.4" stroke-linecap="round" stroke-linejoin="round"/><path d="M2693 256 V280 M2681 268 H2705" stroke="#3b6ee8" stroke-width="3"/><path d="M3075 256 V280 M3063 268 H3087" stroke="#fff" stroke-width="3"/><circle cx="3330.8" cy="453" r="33" fill="none" stroke="#d1d5db" stroke-width="1.5"/><circle cx="3327" cy="449" r="9" fill="none" stroke="#6b7280" stroke-width="2.5"/><path d="M3334 456 L3341 463" stroke="#6b7280" stroke-width="2.5" stroke-linecap="round"/></svg></div><div style="position:absolute;left:0px;top:0px;width:3444px;height:2154px;background:rgba(0,0,0,0.6);z-index:10;"></div><div style="position:absolute;left:0;top:0;width:3444px;height:2154px;z-index:11"><div style="position:absolute;left:3340.2px;top:2030.8px;width:89.0px;height:89.00000000000023px;background:#3b82f6;border-radius:50%;box-shadow:0 2px 6px rgba(0,0,0,0.3);"></div><div style="position:absolute;left:3369.9px;top:2049.2px;font-family:'Liberation Sans', sans-serif;font-size:55px;line-height:55px;font-weight:700;color:#ffffff;white-space:pre;z-index:2;transform:scale(0.8966,1.0000);transform-origin:0 45.3px;">?</div></div><div style="position:absolute;left:0;top:0;width:3444px;height:2154px;z-index:12"><div style="position:absolute;left:730px;top:517px;width:1980px;height:1117px;background:#ffffff;border-radius:14px;box-shadow:0 4px 16px rgba(0,0,0,0.12);"></div><div style="position:absolute;left:758.4px;top:552.3px;font-family:'Liberation Sans', sans-serif;font-size:26.8px;line-height:26.8px;font-weight:700;color:#0b1020;white-space:pre;z-index:2;transform:scale(0.9679,1.0000);transform-origin:0 22.1px;">Add Managed View</div><div style="position:absolute;left:759px;top:613px;width:1922px;height:2px;background:#d9dde3;"></div><div style="position:absolute;left:758.0px;top:646.2px;font-family:'Liberation Sans', sans-serif;font-size:23px;line-height:23px;font-weight:700;color:#1f2937;white-space:pre;z-index:2;">Name</div><div style="position:absolute;left:759px;top:676.3px;width:546.5999999999999px;height:64.20000000000005px;background:#e8effd;border:1.2px solid #cfd6e0;border-radius:16px;box-sizing:border-box;"></div><div style="position:absolute;left:781.3px;top:696.9px;font-family:'Liberation Sans', sans-serif;font-size:24px;line-height:24px;font-weight:400;color:#0b1020;white-space:pre;z-index:2;-webkit-text-stroke:0.35px #0b1020;transform:scale(0.8603,1.0000);transform-origin:0 19.8px;">CLIENT_PROFILE_WO_GENDER</div><div style="position:absolute;left:758.0px;top:778.2px;font-family:'Liberation Sans', sans-serif;font-size:23px;line-height:23px;font-weight:700;color:#1f2937;white-space:pre;z-index:2;transform:scale(0.9720,1.0000);transform-origin:0 18.9px;">Description</div><div style="position:absolute;left:759px;top:809.3px;width:546.5999999999999px;height:102.60000000000002px;background:#ffffff;border:1.2px solid #cfd6e0;border-radius:16px;box-sizing:border-box;"></div><div style="position:absolute;left:780.2px;top:832.6px;font-family:'Liberation Sans', sans-serif;font-size:24px;line-height:24px;font-weight:400;color:#0b1020;white-space:pre;z-index:2;-webkit-text-stroke:0.35px #0b1020;transform:scale(0.8978,1.0000);transform-origin:0 19.8px;">Exclude GENDER from CLIENT_PROFILE</div><div style="position:absolute;left:758.1px;top:945.3px;font-family:'Liberation Sans', sans-serif;font-size:23px;line-height:23px;font-weight:700;color:#1f2937;white-space:pre;z-index:2;transform:scale(0.9000,1.0000);transform-origin:0 18.9px;">SQL</div><div style="position:absolute;left:759.3px;top:980.2px;width:546.2px;height:413.39999999999986px;background:#ece9e9;border:1.2px solid #cfd3da;border-radius:14px;box-sizing:border-box;"></div><div style="position:absolute;left:759.3px;top:980.2px;width:546px;height:410.5px;overflow:hidden;border-radius:14px;"><div style="position:absolute;left:-759.3px;top:-980.2px;"><div style="position:absolute;left:781.0px;top:1006.5px;font-family:'Liberation Mono', monospace;font-size:21.7px;line-height:21.7px;font-weight:400;color:#444444;white-space:pre;z-index:2;transform:scale(1.0000,1.1000);transform-origin:0 16.5px;">1</div><div style="position:absolute;left:812.8px;top:1006.5px;font-family:'Liberation Mono', monospace;font-size:21.7px;line-height:21.7px;font-weight:400;color:#990055;white-space:pre;z-index:2;transform:scale(1.0000,1.1000);transform-origin:0 16.5px;">SELECT</div><div style="position:absolute;left:781.0px;top:1039.9px;font-family:'Liberation Mono', monospace;font-size:21.7px;line-height:21.7px;font-weight:400;color:#444444;white-space:pre;z-index:2;transform:scale(1.0000,1.1000);transform-origin:0 16.5px;">2</div><div style="position:absolute;left:836.8px;top:1039.9px;font-family:'Liberation Mono', monospace;font-size:21.7px;line-height:21.7px;font-weight:400;color:#669900;white-space:pre;z-index:2;transform:scale(1.0000,1.1000);transform-origin:0 16.5px;">"ClientID"</div><div style="position:absolute;left:966.8px;top:1039.9px;font-family:'Liberation Mono', monospace;font-size:21.7px;line-height:21.7px;font-weight:400;color:#999999;white-space:pre;z-index:2;transform:scale(1.0000,1.1000);transform-origin:0 16.5px;">,</div><div style="position:absolute;left:781.0px;top:1073.3px;font-family:'Liberation Mono', monospace;font-size:21.7px;line-height:21.7px;font-weight:400;color:#444444;white-space:pre;z-index:2;transform:scale(1.0000,1.1000);transform-origin:0 16.5px;">3</div><div style="position:absolute;left:836.8px;top:1073.3px;font-family:'Liberation Mono', monospace;font-size:21.7px;line-height:21.7px;font-weight:400;color:#669900;white-space:pre;z-index:2;transform:scale(1.0000,1.1000);transform-origin:0 16.5px;">"BIRTHDATE"</div><div style="position:absolute;left:979.8px;top:1073.3px;font-family:'Liberation Mono', monospace;font-size:21.7px;line-height:21.7px;font-weight:400;color:#999999;white-space:pre;z-index:2;transform:scale(1.0000,1.1000);transform-origin:0 16.5px;">,</div><div style="position:absolute;left:781.0px;top:1106.8px;font-family:'Liberation Mono', monospace;font-size:21.7px;line-height:21.7px;font-weight:400;color:#444444;white-space:pre;z-index:2;transform:scale(1.0000,1.1000);transform-origin:0 16.5px;">4</div><div style="position:absolute;left:836.8px;top:1106.8px;font-family:'Liberation Mono', monospace;font-size:21.7px;line-height:21.7px;font-weight:400;color:#669900;white-space:pre;z-index:2;transform:scale(1.0000,1.1000);transform-origin:0 16.5px;">"FLAG_OWN_CAR"</div><div style="position:absolute;left:1018.8px;top:1106.8px;font-family:'Liberation Mono', monospace;font-size:21.7px;line-height:21.7px;font-weight:400;color:#999999;white-space:pre;z-index:2;transform:scale(1.0000,1.1000);transform-origin:0 16.5px;">,</div><div style="position:absolute;left:781.0px;top:1140.2px;font-family:'Liberation Mono', monospace;font-size:21.7px;line-height:21.7px;font-weight:400;color:#444444;white-space:pre;z-index:2;transform:scale(1.0000,1.1000);transform-origin:0 16.5px;">5</div><div style="position:absolute;left:836.8px;top:1140.2px;font-family:'Liberation Mono', monospace;font-size:21.7px;line-height:21.7px;font-weight:400;color:#669900;white-space:pre;z-index:2;transform:scale(1.0000,1.1000);transform-origin:0 16.5px;">"FLAG_OWN_REALTY"</div><div style="position:absolute;left:1057.8px;top:1140.2px;font-family:'Liberation Mono', monospace;font-size:21.7px;line-height:21.7px;font-weight:400;color:#999999;white-space:pre;z-index:2;transform:scale(1.0000,1.1000);transform-origin:0 16.5px;">,</div><div style="position:absolute;left:781.0px;top:1173.6px;font-family:'Liberation Mono', monospace;font-size:21.7px;line-height:21.7px;font-weight:400;color:#444444;white-space:pre;z-index:2;transform:scale(1.0000,1.1000);transform-origin:0 16.5px;">6</div><div style="position:absolute;left:836.8px;top:1173.6px;font-family:'Liberation Mono', monospace;font-size:21.7px;line-height:21.7px;font-weight:400;color:#669900;white-space:pre;z-index:2;transform:scale(1.0000,1.1000);transform-origin:0 16.5px;">"CNT_CHILDREN"</div><div style="position:absolute;left:1018.8px;top:1173.6px;font-family:'Liberation Mono', monospace;font-size:21.7px;line-height:21.7px;font-weight:400;color:#999999;white-space:pre;z-index:2;transform:scale(1.0000,1.1000);transform-origin:0 16.5px;">,</div><div style="position:absolute;left:781.0px;top:1207.0px;font-family:'Liberation Mono', monospace;font-size:21.7px;line-height:21.7px;font-weight:400;color:#444444;white-space:pre;z-index:2;transform:scale(1.0000,1.1000);transform-origin:0 16.5px;">7</div><div style="position:absolute;left:836.8px;top:1207.0px;font-family:'Liberation Mono', monospace;font-size:21.7px;line-height:21.7px;font-weight:400;color:#669900;white-space:pre;z-index:2;transform:scale(1.0000,1.1000);transform-origin:0 16.5px;">"INCOME_TYPE"</div><div style="position:absolute;left:1005.8px;top:1207.0px;font-family:'Liberation Mono', monospace;font-size:21.7px;line-height:21.7px;font-weight:400;color:#999999;white-space:pre;z-index:2;transform:scale(1.0000,1.1000);transform-origin:0 16.5px;">,</div><div style="position:absolute;left:781.0px;top:1240.4px;font-family:'Liberation Mono', monospace;font-size:21.7px;line-height:21.7px;font-weight:400;color:#444444;white-space:pre;z-index:2;transform:scale(1.0000,1.1000);transform-origin:0 16.5px;">8</div><div style="position:absolute;left:836.8px;top:1240.4px;font-family:'Liberation Mono', monospace;font-size:21.7px;line-height:21.7px;font-weight:400;color:#669900;white-space:pre;z-index:2;transform:scale(1.0000,1.1000);transform-origin:0 16.5px;">"EDUCATION_TYPE"</div><div style="position:absolute;left:1044.8px;top:1240.4px;font-family:'Liberation Mono', monospace;font-size:21.7px;line-height:21.7px;font-weight:400;color:#999999;white-space:pre;z-index:2;transform:scale(1.0000,1.1000);transform-origin:0 16.5px;">,</div><div style="position:absolute;left:781.0px;top:1273.9px;font-family:'Liberation Mono', monospace;font-size:21.7px;line-height:21.7px;font-weight:400;color:#444444;white-space:pre;z-index:2;transform:scale(1.0000,1.1000);transform-origin:0 16.5px;">9</div><div style="position:absolute;left:836.8px;top:1273.9px;font-family:'Liberation Mono', monospace;font-size:21.7px;line-height:21.7px;font-weight:400;color:#669900;white-space:pre;z-index:2;transform:scale(1.0000,1.1000);transform-origin:0 16.5px;">"FAMILY_STATUS"</div><div style="position:absolute;left:1031.8px;top:1273.9px;font-family:'Liberation Mono', monospace;font-size:21.7px;line-height:21.7px;font-weight:400;color:#999999;white-space:pre;z-index:2;transform:scale(1.0000,1.1000);transform-origin:0 16.5px;">,</div><div style="position:absolute;left:768.0px;top:1307.3px;font-family:'Liberation Mono', monospace;font-size:21.7px;line-height:21.7px;font-weight:400;color:#444444;white-space:pre;z-index:2;transform:scale(1.0000,1.1000);transform-origin:0 16.5px;">10</div><div style="position:absolute;left:836.8px;top:1307.3px;font-family:'Liberation Mono', monospace;font-size:21.7px;line-height:21.7px;font-weight:400;color:#669900;white-space:pre;z-index:2;transform:scale(1.0000,1.1000);transform-origin:0 16.5px;">"HOUSING_TYPE"</div><div style="position:absolute;left:1018.8px;top:1307.3px;font-family:'Liberation Mono', monospace;font-size:21.7px;line-height:21.7px;font-weight:400;color:#999999;white-space:pre;z-index:2;transform:scale(1.0000,1.1000);transform-origin:0 16.5px;">,</div><div style="position:absolute;left:768.0px;top:1340.7px;font-family:'Liberation Mono', monospace;font-size:21.7px;line-height:21.7px;font-weight:400;color:#444444;white-space:pre;z-index:2;transform:scale(1.0000,1.1000);transform-origin:0 16.5px;">11</div><div style="position:absolute;left:836.8px;top:1340.7px;font-family:'Liberation Mono', monospace;font-size:21.7px;line-height:21.7px;font-weight:400;color:#669900;white-space:pre;z-index:2;transform:scale(1.0000,1.1000);transform-origin:0 16.5px;">"OCCUPATION_TYPE"</div><div style="position:absolute;left:1057.8px;top:1340.7px;font-family:'Liberation Mono', monospace;font-size:21.7px;line-height:21.7px;font-weight:400;color:#999999;white-space:pre;z-index:2;transform:scale(1.0000,1.1000);transform-origin:0 16.5px;">,</div><div style="position:absolute;left:768.0px;top:1374.1px;font-family:'Liberation Mono', monospace;font-size:21.7px;line-height:21.7px;font-weight:400;color:#444444;white-space:pre;z-index:2;transform:scale(1.0000,1.1000);transform-origin:0 16.5px;">12</div><div style="position:absolute;left:836.8px;top:1374.1px;font-family:'Liberation Mono', monospace;font-size:21.7px;line-height:21.7px;font-weight:400;color:#669900;white-space:pre;z-index:2;transform:scale(1.0000,1.1000);transform-origin:0 16.5px;">"CNT_FAM_MEMBERS"</div><div style="position:absolute;left:1057.8px;top:1374.1px;font-family:'Liberation Mono', monospace;font-size:21.7px;line-height:21.7px;font-weight:400;color:#999999;white-space:pre;z-index:2;transform:scale(1.0000,1.1000);transform-origin:0 16.5px;">,</div></div></div><div style="position:absolute;left:759.4px;top:1423px;width:73.20000000000005px;height:35.700000000000045px;background:#e5e7eb;border-radius:18px;"></div><div style="position:absolute;left:763.6px;top:1428.4px;width:25.0px;height:25.0px;background:#ffffff;border-radius:50%;box-shadow:0 1px 2px rgba(0,0,0,0.2);"></div><div style="position:absolute;left:852.9px;top:1430.3px;font-family:'Liberation Sans', sans-serif;font-size:23.5px;line-height:23.5px;font-weight:400;color:#0b1020;white-space:pre;z-index:2;-webkit-text-stroke:0.35px #0b1020;transform:scale(0.9750,1.0000);transform-origin:0 19.3px;">Is Global View?</div><div style="position:absolute;left:808.2px;top:1488px;width:449.70000000000005px;height:62.799999999999955px;background:#ffffff;border:1.6px solid #3b82f6;border-radius:32px;box-sizing:border-box;"></div><div style="position:absolute;left:930.6px;top:1507.1px;font-family:'Liberation Sans', sans-serif;font-size:25px;line-height:25px;font-weight:700;color:#3b82f6;white-space:pre;z-index:2;transform:scale(1.0342,1.0000);transform-origin:0 20.6px;">Save Managed View</div><div style="position:absolute;left:1335.6px;top:637px;width:1.300000000000182px;height:969px;background:#6b7280;"></div><div style="position:absolute;left:1364.2px;top:640.2px;font-family:'Liberation Sans', sans-serif;font-size:23px;line-height:23px;font-weight:700;color:#0b1020;white-space:pre;z-index:2;transform:scale(0.9616,1.0000);transform-origin:0 18.9px;">Preview</div><div style="position:absolute;left:1365.3px;top:712.2px;width:1315.5px;height:892.8px;border:1.2px solid #e5e7eb;box-sizing:border-box;overflow:hidden;"><div style="position:absolute;left:-1365.3px;top:-712.2px;"><div style="position:absolute;left:1509.2px;top:892.5px;width:1171.6000000000001px;height:70.60000000000002px;background:#f7f8fa;"></div><div style="position:absolute;left:1365.3px;top:892.5px;width:143.9000000000001px;height:70.60000000000002px;background:#ffffff;"></div><div style="position:absolute;left:1365.3px;top:962.1px;width:1315.5000000000002px;height:1.2000000000000455px;background:#e5e7eb;"></div><div style="position:absolute;left:1509.2px;top:963.1px;width:1171.6000000000001px;height:70.60000000000002px;background:#ffffff;"></div><div style="position:absolute;left:1365.3px;top:963.1px;width:143.9000000000001px;height:70.60000000000002px;background:#ffffff;"></div><div style="position:absolute;left:1365.3px;top:1032.7px;width:1315.5000000000002px;height:1.2000000000000455px;background:#e5e7eb;"></div><div style="position:absolute;left:1509.2px;top:1033.7px;width:1171.6000000000001px;height:70.59999999999991px;background:#f7f8fa;"></div><div style="position:absolute;left:1365.3px;top:1033.7px;width:143.9000000000001px;height:70.59999999999991px;background:#ffffff;"></div><div style="position:absolute;left:1365.3px;top:1103.3px;width:1315.5000000000002px;height:1.2000000000000455px;background:#e5e7eb;"></div><div style="position:absolute;left:1509.2px;top:1104.3px;width:1171.6000000000001px;height:70.60000000000014px;background:#ffffff;"></div><div style="position:absolute;left:1365.3px;top:1104.3px;width:143.9000000000001px;height:70.60000000000014px;background:#ffffff;"></div><div style="position:absolute;left:1365.3px;top:1173.9px;width:1315.5000000000002px;height:1.2000000000000455px;background:#e5e7eb;"></div><div style="position:absolute;left:1509.2px;top:1174.9px;width:1171.6000000000001px;height:70.59999999999991px;background:#f7f8fa;"></div><div style="position:absolute;left:1365.3px;top:1174.9px;width:143.9000000000001px;height:70.59999999999991px;background:#ffffff;"></div><div style="position:absolute;left:1365.3px;top:1244.5px;width:1315.5000000000002px;height:1.2000000000000455px;background:#e5e7eb;"></div><div style="position:absolute;left:1509.2px;top:1245.5px;width:1171.6000000000001px;height:70.59999999999991px;background:#ffffff;"></div><div style="position:absolute;left:1365.3px;top:1245.5px;width:143.9000000000001px;height:70.59999999999991px;background:#ffffff;"></div><div style="position:absolute;left:1365.3px;top:1315.1px;width:1315.5000000000002px;height:1.2000000000000455px;background:#e5e7eb;"></div><div style="position:absolute;left:1509.2px;top:1316.1px;width:1171.6000000000001px;height:70.59999999999991px;background:#f7f8fa;"></div><div style="position:absolute;left:1365.3px;top:1316.1px;width:143.9000000000001px;height:70.59999999999991px;background:#ffffff;"></div><div style="position:absolute;left:1365.3px;top:1385.6999999999998px;width:1315.5000000000002px;height:1.2000000000000455px;background:#e5e7eb;"></div><div style="position:absolute;left:1509.2px;top:1386.6999999999998px;width:1171.6000000000001px;height:70.60000000000014px;background:#ffffff;"></div><div style="position:absolute;left:1365.3px;top:1386.6999999999998px;width:143.9000000000001px;height:70.60000000000014px;background:#ffffff;"></div><div style="position:absolute;left:1365.3px;top:1456.3px;width:1315.5000000000002px;height:1.2000000000000455px;background:#e5e7eb;"></div><div style="position:absolute;left:1509.2px;top:1457.3px;width:1171.6000000000001px;height:76.70000000000005px;background:#f1f1f2;"></div><div style="position:absolute;left:1365.3px;top:1457.3px;width:143.9000000000001px;height:76.70000000000005px;background:#f1f1f2;"></div><div style="position:absolute;left:1365.3px;top:1533.0px;width:1315.5000000000002px;height:1.2000000000000455px;background:#e5e7eb;"></div><div style="position:absolute;left:1509.2px;top:1534.0px;width:1171.6000000000001px;height:71.0px;background:#ffffff;"></div><div style="position:absolute;left:1365.3px;top:1534.0px;width:143.9000000000001px;height:71.0px;background:#ffffff;"></div><div style="position:absolute;left:1365.3px;top:1604.0px;width:1315.5000000000002px;height:1.2000000000000455px;background:#e5e7eb;"></div><div style="position:absolute;left:1365.3px;top:892.5px;width:1315.5000000000002px;height:14.0px;background:linear-gradient(rgba(0,0,0,0.07), rgba(0,0,0,0));"></div><div style="position:absolute;left:1495.2px;top:892.5px;width:14.0px;height:712.5px;background:linear-gradient(90deg, rgba(0,0,0,0), rgba(0,0,0,0.045));"></div><div style="position:absolute;left:1508.7px;top:814.4px;width:1.5px;height:790.6px;background:#e5e7eb;"></div><div style="position:absolute;left:1778.9px;top:814.4px;width:1.5px;height:790.6px;background:#e5e7eb;"></div><div style="position:absolute;left:2048.9px;top:814.4px;width:1.5px;height:790.6px;background:#e5e7eb;"></div><div style="position:absolute;left:2319.0px;top:814.4px;width:1.5px;height:790.6px;background:#e5e7eb;"></div><div style="position:absolute;left:2589.1px;top:814.4px;width:1.5px;height:790.6px;background:#e5e7eb;"></div><div style="position:absolute;left:1500.0px;top:831.7px;width:7.2000000000000455px;height:42.89999999999998px;background:#d1d5db;border-radius:4px;"></div><div style="position:absolute;left:1770.2px;top:831.7px;width:7.2000000000000455px;height:42.89999999999998px;background:#d1d5db;border-radius:4px;"></div><div style="position:absolute;left:2040.2px;top:831.7px;width:7.2000000000000455px;height:42.89999999999998px;background:#d1d5db;border-radius:4px;"></div><div style="position:absolute;left:2310.3px;top:831.7px;width:7.199999999999818px;height:42.89999999999998px;background:#d1d5db;border-radius:4px;"></div><div style="position:absolute;left:2580.4px;top:831.7px;width:7.199999999999818px;height:42.89999999999998px;background:#d1d5db;border-radius:4px;"></div></div></div><div style="position:absolute;left:1576.3px;top:842.9px;font-family:'Liberation Sans', sans-serif;font-size:24px;line-height:24px;font-weight:700;color:#000000;white-space:pre;z-index:2;transform:scale(0.9213,1.0000);transform-origin:0 19.8px;">ClientID</div><div style="position:absolute;left:1839.0px;top:838.6px;font-family:'Liberation Sans', sans-serif;font-size:24px;line-height:24px;font-weight:700;color:#000000;white-space:pre;z-index:2;transform:scale(0.8896,1.0000);transform-origin:0 19.8px;">BIRTHDATE</div><div style="position:absolute;left:2109.0px;top:838.6px;font-family:'Liberation Sans', sans-serif;font-size:24px;line-height:24px;font-weight:700;color:#000000;white-space:pre;z-index:2;transform:scale(0.8625,1.0000);transform-origin:0 19.8px;">FLAG_OWN_CA</div><div style="position:absolute;left:2379.1px;top:838.6px;font-family:'Liberation Sans', sans-serif;font-size:24px;line-height:24px;font-weight:700;color:#000000;white-space:pre;z-index:2;transform:scale(0.8665,1.0000);transform-origin:0 19.8px;">FLAG_OWN_RE</div><div style="position:absolute;left:2656.6px;top:842.9px;font-family:'Liberation Sans', sans-serif;font-size:24px;line-height:24px;font-weight:700;color:#000000;white-space:pre;z-index:2;">CN</div><div style="position:absolute;left:2680.8px;top:800px;width:29.0px;height:805px;background:#ffffff;z-index:3;"></div><div style="position:absolute;left:2679.6000000000004px;top:712.2px;width:1.199999999999818px;height:892.8px;background:#e5e7eb;z-index:3;"></div><div style="position:absolute;left:1383.7px;top:916.4px;font-family:'Liberation Sans', sans-serif;font-size:23.2px;line-height:23.2px;font-weight:400;color:#0b1020;white-space:pre;z-index:2;-webkit-text-stroke:0.35px #0b1020;">0</div><div style="position:absolute;left:1527.4px;top:916.4px;font-family:'Liberation Sans', sans-serif;font-size:23.2px;line-height:23.2px;font-weight:400;color:#0b1020;white-space:pre;z-index:2;-webkit-text-stroke:0.35px #0b1020;">100002</div><div style="position:absolute;left:1797.6px;top:916.4px;font-family:'Liberation Sans', sans-serif;font-size:23.2px;line-height:23.2px;font-weight:400;color:#0b1020;white-space:pre;z-index:2;-webkit-text-stroke:0.35px #0b1020;">1996-03-22</div><div style="position:absolute;left:2066.6px;top:916.4px;font-family:'Liberation Sans', sans-serif;font-size:23.2px;line-height:23.2px;font-weight:400;color:#0b1020;white-space:pre;z-index:2;-webkit-text-stroke:0.35px #0b1020;">N</div><div style="position:absolute;left:2338.7px;top:916.4px;font-family:'Liberation Sans', sans-serif;font-size:23.2px;line-height:23.2px;font-weight:400;color:#0b1020;white-space:pre;z-index:2;-webkit-text-stroke:0.35px #0b1020;">Y</div><div style="position:absolute;left:2607.8px;top:916.4px;font-family:'Liberation Sans', sans-serif;font-size:23.2px;line-height:23.2px;font-weight:400;color:#0b1020;white-space:pre;z-index:2;-webkit-text-stroke:0.35px #0b1020;">0</div><div style="position:absolute;left:1383.7px;top:987.0px;font-family:'Liberation Sans', sans-serif;font-size:23.2px;line-height:23.2px;font-weight:400;color:#0b1020;white-space:pre;z-index:2;-webkit-text-stroke:0.35px #0b1020;">1</div><div style="position:absolute;left:1527.4px;top:987.0px;font-family:'Liberation Sans', sans-serif;font-size:23.2px;line-height:23.2px;font-weight:400;color:#0b1020;white-space:pre;z-index:2;-webkit-text-stroke:0.35px #0b1020;">100003</div><div style="position:absolute;left:1797.6px;top:987.0px;font-family:'Liberation Sans', sans-serif;font-size:23.2px;line-height:23.2px;font-weight:400;color:#0b1020;white-space:pre;z-index:2;-webkit-text-stroke:0.35px #0b1020;">1977-03-23</div><div style="position:absolute;left:2066.6px;top:987.0px;font-family:'Liberation Sans', sans-serif;font-size:23.2px;line-height:23.2px;font-weight:400;color:#0b1020;white-space:pre;z-index:2;-webkit-text-stroke:0.35px #0b1020;">N</div><div style="position:absolute;left:2336.7px;top:987.0px;font-family:'Liberation Sans', sans-serif;font-size:23.2px;line-height:23.2px;font-weight:400;color:#0b1020;white-space:pre;z-index:2;-webkit-text-stroke:0.35px #0b1020;">N</div><div style="position:absolute;left:2607.8px;top:987.0px;font-family:'Liberation Sans', sans-serif;font-size:23.2px;line-height:23.2px;font-weight:400;color:#0b1020;white-space:pre;z-index:2;-webkit-text-stroke:0.35px #0b1020;">0</div><div style="position:absolute;left:1383.7px;top:1057.6px;font-family:'Liberation Sans', sans-serif;font-size:23.2px;line-height:23.2px;font-weight:400;color:#0b1020;white-space:pre;z-index:2;-webkit-text-stroke:0.35px #0b1020;">2</div><div style="position:absolute;left:1527.4px;top:1057.6px;font-family:'Liberation Sans', sans-serif;font-size:23.2px;line-height:23.2px;font-weight:400;color:#0b1020;white-space:pre;z-index:2;-webkit-text-stroke:0.35px #0b1020;">100004</div><div style="position:absolute;left:1797.6px;top:1057.6px;font-family:'Liberation Sans', sans-serif;font-size:23.2px;line-height:23.2px;font-weight:400;color:#0b1020;white-space:pre;z-index:2;-webkit-text-stroke:0.35px #0b1020;">1970-04-21</div><div style="position:absolute;left:2068.6px;top:1057.6px;font-family:'Liberation Sans', sans-serif;font-size:23.2px;line-height:23.2px;font-weight:400;color:#0b1020;white-space:pre;z-index:2;-webkit-text-stroke:0.35px #0b1020;">Y</div><div style="position:absolute;left:2338.7px;top:1057.6px;font-family:'Liberation Sans', sans-serif;font-size:23.2px;line-height:23.2px;font-weight:400;color:#0b1020;white-space:pre;z-index:2;-webkit-text-stroke:0.35px #0b1020;">Y</div><div style="position:absolute;left:2607.8px;top:1057.6px;font-family:'Liberation Sans', sans-serif;font-size:23.2px;line-height:23.2px;font-weight:400;color:#0b1020;white-space:pre;z-index:2;-webkit-text-stroke:0.35px #0b1020;">0</div><div style="position:absolute;left:1383.7px;top:1128.2px;font-family:'Liberation Sans', sans-serif;font-size:23.2px;line-height:23.2px;font-weight:400;color:#0b1020;white-space:pre;z-index:2;-webkit-text-stroke:0.35px #0b1020;">3</div><div style="position:absolute;left:1527.4px;top:1128.2px;font-family:'Liberation Sans', sans-serif;font-size:23.2px;line-height:23.2px;font-weight:400;color:#0b1020;white-space:pre;z-index:2;-webkit-text-stroke:0.35px #0b1020;">100006</div><div style="position:absolute;left:1797.6px;top:1128.2px;font-family:'Liberation Sans', sans-serif;font-size:23.2px;line-height:23.2px;font-weight:400;color:#0b1020;white-space:pre;z-index:2;-webkit-text-stroke:0.35px #0b1020;">1970-01-26</div><div style="position:absolute;left:2066.6px;top:1128.2px;font-family:'Liberation Sans', sans-serif;font-size:23.2px;line-height:23.2px;font-weight:400;color:#0b1020;white-space:pre;z-index:2;-webkit-text-stroke:0.35px #0b1020;">N</div><div style="position:absolute;left:2338.7px;top:1128.2px;font-family:'Liberation Sans', sans-serif;font-size:23.2px;line-height:23.2px;font-weight:400;color:#0b1020;white-space:pre;z-index:2;-webkit-text-stroke:0.35px #0b1020;">Y</div><div style="position:absolute;left:2607.8px;top:1128.2px;font-family:'Liberation Sans', sans-serif;font-size:23.2px;line-height:23.2px;font-weight:400;color:#0b1020;white-space:pre;z-index:2;-webkit-text-stroke:0.35px #0b1020;">0</div><div style="position:absolute;left:1384.7px;top:1198.8px;font-family:'Liberation Sans', sans-serif;font-size:23.2px;line-height:23.2px;font-weight:400;color:#0b1020;white-space:pre;z-index:2;-webkit-text-stroke:0.35px #0b1020;">4</div><div style="position:absolute;left:1527.4px;top:1198.8px;font-family:'Liberation Sans', sans-serif;font-size:23.2px;line-height:23.2px;font-weight:400;color:#0b1020;white-space:pre;z-index:2;-webkit-text-stroke:0.35px #0b1020;">100007</div><div style="position:absolute;left:1797.6px;top:1198.8px;font-family:'Liberation Sans', sans-serif;font-size:23.2px;line-height:23.2px;font-weight:400;color:#0b1020;white-space:pre;z-index:2;-webkit-text-stroke:0.35px #0b1020;">1966-10-21</div><div style="position:absolute;left:2066.6px;top:1198.8px;font-family:'Liberation Sans', sans-serif;font-size:23.2px;line-height:23.2px;font-weight:400;color:#0b1020;white-space:pre;z-index:2;-webkit-text-stroke:0.35px #0b1020;">N</div><div style="position:absolute;left:2338.7px;top:1198.8px;font-family:'Liberation Sans', sans-serif;font-size:23.2px;line-height:23.2px;font-weight:400;color:#0b1020;white-space:pre;z-index:2;-webkit-text-stroke:0.35px #0b1020;">Y</div><div style="position:absolute;left:2607.8px;top:1198.8px;font-family:'Liberation Sans', sans-serif;font-size:23.2px;line-height:23.2px;font-weight:400;color:#0b1020;white-space:pre;z-index:2;-webkit-text-stroke:0.35px #0b1020;">0</div><div style="position:absolute;left:1383.7px;top:1269.4px;font-family:'Liberation Sans', sans-serif;font-size:23.2px;line-height:23.2px;font-weight:400;color:#0b1020;white-space:pre;z-index:2;-webkit-text-stroke:0.35px #0b1020;">5</div><div style="position:absolute;left:1527.4px;top:1269.4px;font-family:'Liberation Sans', sans-serif;font-size:23.2px;line-height:23.2px;font-weight:400;color:#0b1020;white-space:pre;z-index:2;-webkit-text-stroke:0.35px #0b1020;">100008</div><div style="position:absolute;left:1797.6px;top:1269.4px;font-family:'Liberation Sans', sans-serif;font-size:23.2px;line-height:23.2px;font-weight:400;color:#0b1020;white-space:pre;z-index:2;-webkit-text-stroke:0.35px #0b1020;">1976-04-29</div><div style="position:absolute;left:2066.6px;top:1269.4px;font-family:'Liberation Sans', sans-serif;font-size:23.2px;line-height:23.2px;font-weight:400;color:#0b1020;white-space:pre;z-index:2;-webkit-text-stroke:0.35px #0b1020;">N</div><div style="position:absolute;left:2338.7px;top:1269.4px;font-family:'Liberation Sans', sans-serif;font-size:23.2px;line-height:23.2px;font-weight:400;color:#0b1020;white-space:pre;z-index:2;-webkit-text-stroke:0.35px #0b1020;">Y</div><div style="position:absolute;left:2607.8px;top:1269.4px;font-family:'Liberation Sans', sans-serif;font-size:23.2px;line-height:23.2px;font-weight:400;color:#0b1020;white-space:pre;z-index:2;-webkit-text-stroke:0.35px #0b1020;">0</div><div style="position:absolute;left:1383.7px;top:1340.0px;font-family:'Liberation Sans', sans-serif;font-size:23.2px;line-height:23.2px;font-weight:400;color:#0b1020;white-space:pre;z-index:2;-webkit-text-stroke:0.35px #0b1020;">6</div><div style="position:absolute;left:1527.4px;top:1340.0px;font-family:'Liberation Sans', sans-serif;font-size:23.2px;line-height:23.2px;font-weight:400;color:#0b1020;white-space:pre;z-index:2;-webkit-text-stroke:0.35px #0b1020;">100009</div><div style="position:absolute;left:1797.6px;top:1340.0px;font-family:'Liberation Sans', sans-serif;font-size:23.2px;line-height:23.2px;font-weight:400;color:#0b1020;white-space:pre;z-index:2;-webkit-text-stroke:0.35px #0b1020;">1983-09-27</div><div style="position:absolute;left:2068.6px;top:1340.0px;font-family:'Liberation Sans', sans-serif;font-size:23.2px;line-height:23.2px;font-weight:400;color:#0b1020;white-space:pre;z-index:2;-webkit-text-stroke:0.35px #0b1020;">Y</div><div style="position:absolute;left:2338.7px;top:1340.0px;font-family:'Liberation Sans', sans-serif;font-size:23.2px;line-height:23.2px;font-weight:400;color:#0b1020;white-space:pre;z-index:2;-webkit-text-stroke:0.35px #0b1020;">Y</div><div style="position:absolute;left:2607.8px;top:1340.0px;font-family:'Liberation Sans', sans-serif;font-size:23.2px;line-height:23.2px;font-weight:400;color:#0b1020;white-space:pre;z-index:2;-webkit-text-stroke:0.35px #0b1020;">1</div><div style="position:absolute;left:1383.7px;top:1410.6px;font-family:'Liberation Sans', sans-serif;font-size:23.2px;line-height:23.2px;font-weight:400;color:#0b1020;white-space:pre;z-index:2;-webkit-text-stroke:0.35px #0b1020;">7</div><div style="position:absolute;left:1527.4px;top:1410.6px;font-family:'Liberation Sans', sans-serif;font-size:23.2px;line-height:23.2px;font-weight:400;color:#0b1020;white-space:pre;z-index:2;-webkit-text-stroke:0.35px #0b1020;">100010</div><div style="position:absolute;left:1797.6px;top:1410.6px;font-family:'Liberation Sans', sans-serif;font-size:23.2px;line-height:23.2px;font-weight:400;color:#0b1020;white-space:pre;z-index:2;-webkit-text-stroke:0.35px #0b1020;">1972-07-29</div><div style="position:absolute;left:2068.6px;top:1410.6px;font-family:'Liberation Sans', sans-serif;font-size:23.2px;line-height:23.2px;font-weight:400;color:#0b1020;white-space:pre;z-index:2;-webkit-text-stroke:0.35px #0b1020;">Y</div><div style="position:absolute;left:2338.7px;top:1410.6px;font-family:'Liberation Sans', sans-serif;font-size:23.2px;line-height:23.2px;font-weight:400;color:#0b1020;white-space:pre;z-index:2;-webkit-text-stroke:0.35px #0b1020;">Y</div><div style="position:absolute;left:2607.8px;top:1410.6px;font-family:'Liberation Sans', sans-serif;font-size:23.2px;line-height:23.2px;font-weight:400;color:#0b1020;white-space:pre;z-index:2;-webkit-text-stroke:0.35px #0b1020;">0</div><div style="position:absolute;left:1383.7px;top:1481.2px;font-family:'Liberation Sans', sans-serif;font-size:23.2px;line-height:23.2px;font-weight:400;color:#0b1020;white-space:pre;z-index:2;-webkit-text-stroke:0.35px #0b1020;">8</div><div style="position:absolute;left:1527.4px;top:1481.2px;font-family:'Liberation Sans', sans-serif;font-size:23.2px;line-height:23.2px;font-weight:400;color:#0b1020;white-space:pre;z-index:2;-webkit-text-stroke:0.35px #0b1020;">100011</div><div style="position:absolute;left:1797.6px;top:1481.2px;font-family:'Liberation Sans', sans-serif;font-size:23.2px;line-height:23.2px;font-weight:400;color:#0b1020;white-space:pre;z-index:2;-webkit-text-stroke:0.35px #0b1020;">1969-08-02</div><div style="position:absolute;left:2066.6px;top:1481.2px;font-family:'Liberation Sans', sans-serif;font-size:23.2px;line-height:23.2px;font-weight:400;color:#0b1020;white-space:pre;z-index:2;-webkit-text-stroke:0.35px #0b1020;">N</div><div style="position:absolute;left:2338.7px;top:1481.2px;font-family:'Liberation Sans', sans-serif;font-size:23.2px;line-height:23.2px;font-weight:400;color:#0b1020;white-space:pre;z-index:2;-webkit-text-stroke:0.35px #0b1020;">Y</div><div style="position:absolute;left:2607.8px;top:1481.2px;font-family:'Liberation Sans', sans-serif;font-size:23.2px;line-height:23.2px;font-weight:400;color:#0b1020;white-space:pre;z-index:2;-webkit-text-stroke:0.35px #0b1020;">0</div><div style="position:absolute;left:1383.7px;top:1557.9px;font-family:'Liberation Sans', sans-serif;font-size:23.2px;line-height:23.2px;font-weight:400;color:#0b1020;white-space:pre;z-index:2;-webkit-text-stroke:0.35px #0b1020;">9</div><div style="position:absolute;left:1527.4px;top:1557.9px;font-family:'Liberation Sans', sans-serif;font-size:23.2px;line-height:23.2px;font-weight:400;color:#0b1020;white-space:pre;z-index:2;-webkit-text-stroke:0.35px #0b1020;">100012</div><div style="position:absolute;left:1797.6px;top:1557.9px;font-family:'Liberation Sans', sans-serif;font-size:23.2px;line-height:23.2px;font-weight:400;color:#0b1020;white-space:pre;z-index:2;-webkit-text-stroke:0.35px #0b1020;">1981-07-09</div><div style="position:absolute;left:2066.6px;top:1557.9px;font-family:'Liberation Sans', sans-serif;font-size:23.2px;line-height:23.2px;font-weight:400;color:#0b1020;white-space:pre;z-index:2;-webkit-text-stroke:0.35px #0b1020;">N</div><div style="position:absolute;left:2338.7px;top:1557.9px;font-family:'Liberation Sans', sans-serif;font-size:23.2px;line-height:23.2px;font-weight:400;color:#0b1020;white-space:pre;z-index:2;-webkit-text-stroke:0.35px #0b1020;">Y</div><div style="position:absolute;left:2607.8px;top:1557.9px;font-family:'Liberation Sans', sans-serif;font-size:23.2px;line-height:23.2px;font-weight:400;color:#0b1020;white-space:pre;z-index:2;-webkit-text-stroke:0.35px #0b1020;">0</div><svg style="position:absolute;left:0;top:0;z-index:1" width="3444" height="2154"><path d="M2663 556.5 L2679 573.5 M2679 556.5 L2663 573.5" stroke="#6b7280" stroke-width="2.4" stroke-linecap="round"/><path d="M884 1507 H900 L906 1513 V1530 A2 2 0 0 1 904 1532 H885 A2 2 0 0 1 883 1530 V1509 A2 2 0 0 1 885 1507 Z" fill="none" stroke="#3b82f6" stroke-width="2.6" stroke-linejoin="round"/><path d="M889 1507 V1514 H899 V1507" fill="none" stroke="#3b82f6" stroke-width="2.4"/><circle cx="894.8" cy="1522.5" r="3.2" fill="none" stroke="#3b82f6" stroke-width="2.4"/><circle cx="1336.2" cy="696.4" r="23" fill="#ffffff" stroke="#d1d5db" stroke-width="1.2"/><path d="M1332.7 696.4 H1319.2 M1325.7 689.6 L1318.9 696.4 L1325.7 703.2 M1340.5 696.4 H1354.2 M1347.7 689.6 L1354.5 696.4 L1347.7 703.2" fill="none" stroke="#0b1020" stroke-width="3.4" stroke-linecap="round" stroke-linejoin="round"/><path d="M1393.0 859.0 V840.0 M1388.0 845.0 L1393.0 840.0 L1398.0 845.0" fill="none" stroke="#b8bcc4" stroke-width="2.2" stroke-linecap="round" stroke-linejoin="round"/><path d="M1407.0 840.0 V859.0 M1402.0 854.0 L1407.0 859.0 L1412.0 854.0" fill="none" stroke="#b8bcc4" stroke-width="2.2" stroke-linecap="round" stroke-linejoin="round"/><g transform="translate(1526.8,830.5) scale(1.9)" fill="none" stroke="#8b929c" stroke-width="1.75" stroke-linecap="round" stroke-linejoin="round"><path d="M3 10l2 -2v8"/><path d="M9 8h3a1 1 0 0 1 1 1v2a1 1 0 0 1 -1 1h-2a1 1 0 0 0 -1 1v2a1 1 0 0 0 1 1h3"/><path d="M17 8h2.5a1.5 1.5 0 0 1 1.5 1.5v1a1.5 1.5 0 0 1 -1.5 1.5h-1.5h1.5a1.5 1.5 0 0 1 1.5 1.5v1a1.5 1.5 0 0 1 -1.5 1.5h-2.5"/></g><path d="M1669.0 863.7 V844.7 M1664.0 849.7 L1669.0 844.7 L1674.0 849.7" fill="none" stroke="#b8bcc4" stroke-width="2.2" stroke-linecap="round" stroke-linejoin="round"/><path d="M1683.0 844.7 V863.7 M1678.0 858.7 L1683.0 863.7 L1688.0 858.7" fill="none" stroke="#b8bcc4" stroke-width="2.2" stroke-linecap="round" stroke-linejoin="round"/><g transform="translate(1797.7,831.6) scale(1.54)" fill="none" stroke="#8b929c" stroke-width="1.7" stroke-linecap="round" stroke-linejoin="round"><path d="M3 16v-6a2 2 0 1 1 4 0v6"/><path d="M3 13h4"/><path d="M10 8v6a2 2 0 1 0 4 0v-1a2 2 0 1 0 -4 0v1"/><path d="M20.732 12a2 2 0 0 0 -3.732 1v1a2 2 0 0 0 3.732 1"/></g><path d="M1969.0 859.4 V840.4 M1964.0 845.4 L1969.0 840.4 L1974.0 845.4" fill="none" stroke="#b8bcc4" stroke-width="2.2" stroke-linecap="round" stroke-linejoin="round"/><path d="M1983.0 840.4 V859.4 M1978.0 854.4 L1983.0 859.4 L1988.0 854.4" fill="none" stroke="#b8bcc4" stroke-width="2.2" stroke-linecap="round" stroke-linejoin="round"/><g transform="translate(2067.7,831.6) scale(1.54)" fill="none" stroke="#8b929c" stroke-width="1.7" stroke-linecap="round" stroke-linejoin="round"><path d="M3 16v-6a2 2 0 1 1 4 0v6"/><path d="M3 13h4"/><path d="M10 8v6a2 2 0 1 0 4 0v-1a2 2 0 1 0 -4 0v1"/><path d="M20.732 12a2 2 0 0 0 -3.732 1v1a2 2 0 0 0 3.732 1"/></g><path d="M2278.0 859.4 V840.4 M2273.0 845.4 L2278.0 840.4 L2283.0 845.4" fill="none" stroke="#b8bcc4" stroke-width="2.2" stroke-linecap="round" stroke-linejoin="round"/><path d="M2292.0 840.4 V859.4 M2287.0 854.4 L2292.0 859.4 L2297.0 854.4" fill="none" stroke="#b8bcc4" stroke-width="2.2" stroke-linecap="round" stroke-linejoin="round"/><g transform="translate(2337.8,831.6) scale(1.54)" fill="none" stroke="#8b929c" stroke-width="1.7" stroke-linecap="round" stroke-linejoin="round"><path d="M3 16v-6a2 2 0 1 1 4 0v6"/><path d="M3 13h4"/><path d="M10 8v6a2 2 0 1 0 4 0v-1a2 2 0 1 0 -4 0v1"/><path d="M20.732 12a2 2 0 0 0 -3.732 1v1a2 2 0 0 0 3.732 1"/></g><path d="M2548.0 859.4 V840.4 M2543.0 845.4 L2548.0 840.4 L2553.0 845.4" fill="none" stroke="#b8bcc4" stroke-width="2.2" stroke-linecap="round" stroke-linejoin="round"/><path d="M2562.0 840.4 V859.4 M2557.0 854.4 L2562.0 859.4 L2567.0 854.4" fill="none" stroke="#b8bcc4" stroke-width="2.2" stroke-linecap="round" stroke-linejoin="round"/><g transform="translate(2607.2,830.5) scale(1.9)" fill="none" stroke="#8b929c" stroke-width="1.75" stroke-linecap="round" stroke-linejoin="round"><path d="M3 10l2 -2v8"/><path d="M9 8h3a1 1 0 0 1 1 1v2a1 1 0 0 1 -1 1h-2a1 1 0 0 0 -1 1v2a1 1 0 0 0 1 1h3"/><path d="M17 8h2.5a1.5 1.5 0 0 1 1.5 1.5v1a1.5 1.5 0 0 1 -1.5 1.5h-1.5h1.5a1.5 1.5 0 0 1 1.5 1.5v1a1.5 1.5 0 0 1 -1.5 1.5h-2.5"/></g><circle cx="2568" cy="755.5" r="13.5" fill="none" stroke="#6b7280" stroke-width="3"/><path d="M2578 766 L2588 776.5" stroke="#6b7280" stroke-width="3.2" stroke-linecap="round"/><path d="M2620.5 747.0 H2631.5" stroke="#6b7280" stroke-width="3" stroke-linecap="round"/><path d="M2620.5 754.5 H2631.5" stroke="#6b7280" stroke-width="3" stroke-linecap="round"/><path d="M2620.5 762.0 H2631.5" stroke="#6b7280" stroke-width="3" stroke-linecap="round"/><path d="M2620.5 769.5 H2631.5" stroke="#6b7280" stroke-width="3" stroke-linecap="round"/><path d="M2640.5 747.0 H2651.5" stroke="#6b7280" stroke-width="3" stroke-linecap="round"/><path d="M2640.5 754.5 H2651.5" stroke="#6b7280" stroke-width="3" stroke-linecap="round"/><path d="M2640.5 762.0 H2651.5" stroke="#6b7280" stroke-width="3" stroke-linecap="round"/><path d="M2640.5 769.5 H2651.5" stroke="#6b7280" stroke-width="3" stroke-linecap="round"/></svg></div>
</div></body></html>
